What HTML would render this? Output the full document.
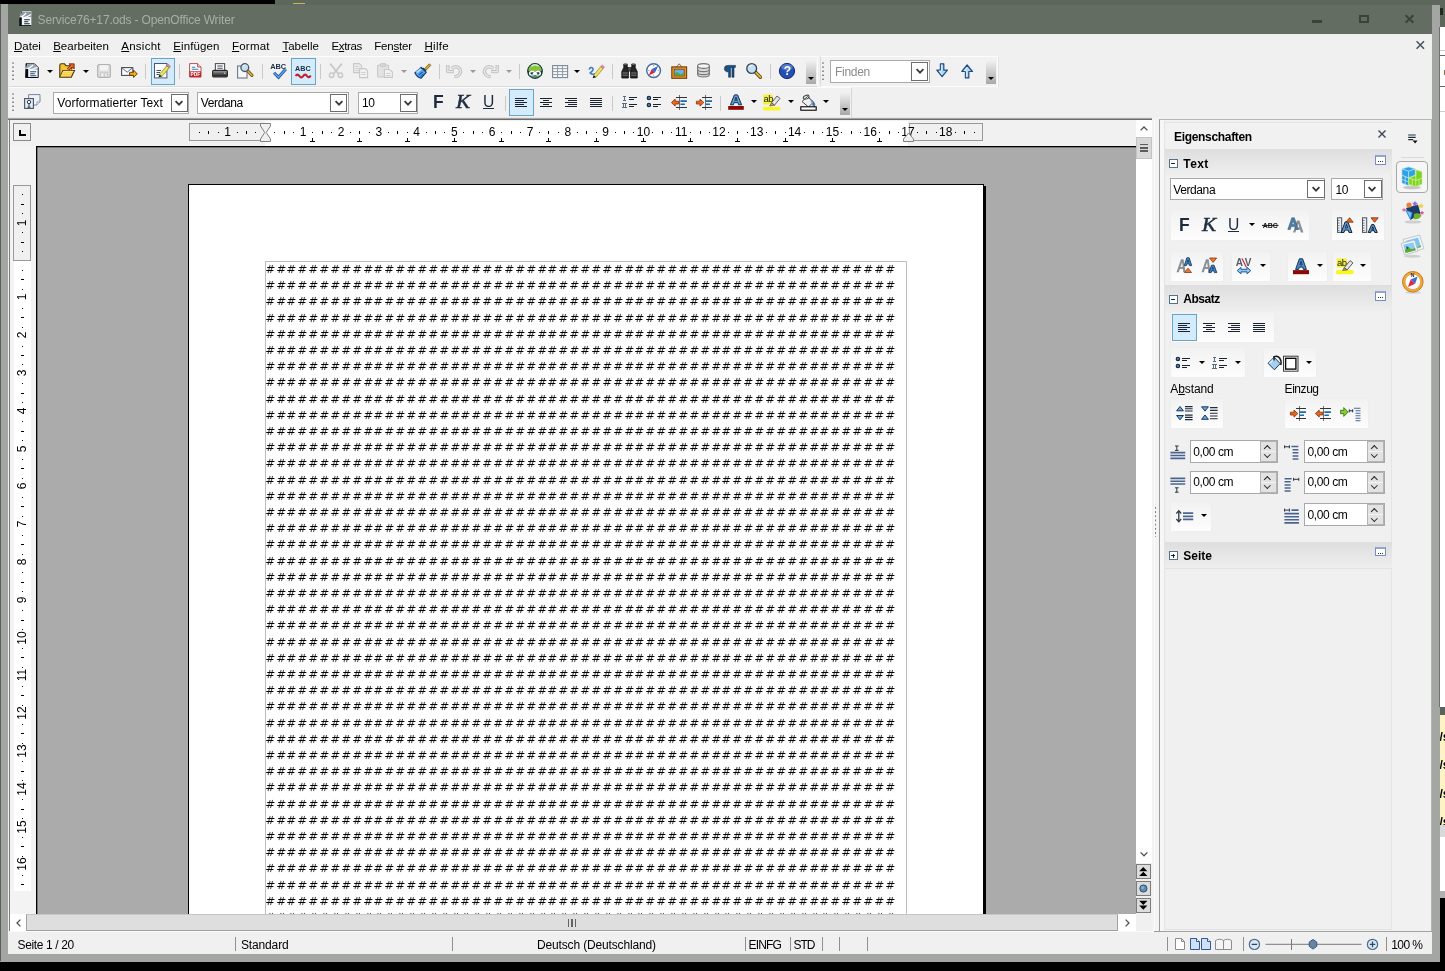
<!DOCTYPE html>
<html lang="de">
<head>
<meta charset="utf-8">
<title>Service76+17.ods - OpenOffice Writer</title>
<style>
*{box-sizing:border-box;margin:0;padding:0}
html,body{width:1445px;height:971px;overflow:hidden;background:#000}
body{position:relative;will-change:transform;font-family:"Liberation Sans",sans-serif;font-size:12px;color:#000}
.a{position:absolute}
.t{position:absolute;white-space:nowrap;line-height:14px}
u{text-decoration:underline;text-underline-offset:1px}
svg{position:absolute;overflow:visible}
/* window frame */
#topstrip{left:275px;top:0;width:1170px;height:5px;background:#5e675c}
#frame{left:0;top:4px;width:1440px;height:957.5px;background:#a3a6a3}
#frameL{left:0;top:4px;width:1px;height:957px;background:#5c5f5c}
#title{left:8px;top:4px;width:1424px;height:30.3px;background:#646d62}
#client{left:8px;top:34.3px;width:1424px;height:920px;background:#f0f0f0}
/* toolbars */
.tb{background:#f1f1f1}
.sep{position:absolute;width:1px;height:15px;background:#c9c9c9;margin-top:2px}
.btnOn{position:absolute;background:#d3ebfb;border:1px solid #6aa5c8}
.combo{position:absolute;background:#fff;border:1px solid #aaa}
.combo .dd{position:absolute;background:#fff;border:1px solid #6d6d6d}
.grip{position:absolute;width:2px;background-image:radial-gradient(circle at 1px 1px,#858585 0.55px,transparent 1px);background-size:2px 4.1px}
.ovf{position:absolute;width:10px;background:linear-gradient(#f2f2f2,#a8a8a8)}
.ovf:after{content:"";position:absolute;left:2.2px;bottom:4px;border:3px solid transparent;border-top:3px solid #000;border-bottom:none}
.arr{position:absolute;width:0;height:0;border:3px solid transparent;border-top:3px solid #000;border-bottom:none}
.arrg{position:absolute;width:0;height:0;border:3px solid transparent;border-top:3px solid #9a9a9a;border-bottom:none}
.rn{font-size:12px;line-height:14px;color:#000}
#txtreal .r{height:16.2px;line-height:16.2px;font-size:13.3px;letter-spacing:3.48px;white-space:pre;color:transparent}
.sb{font-size:12px;letter-spacing:-0.15px}
.ss{position:absolute;top:936.5px;width:1px;height:14.5px;background:#8f8f8f}
.pt{position:absolute;left:1164.5px;width:227px;height:26px;background:linear-gradient(#dedede,#eeeeee)}
.pm{position:absolute;left:1168.8px;width:9px;height:9px;border:1px solid #55718c;background:#fff}
.pm:before{content:"";position:absolute;left:1.5px;top:3px;width:4px;height:1px;background:#222}
.pp:after{content:"";position:absolute;left:3px;top:1.5px;width:1px;height:4px;background:#222}
.mo{position:absolute;left:1375.2px;width:10.8px;height:9.6px;border:1px solid #7a8ebc;border-top:2px solid #92a6d0;background:#fff}
.mo:before{content:"";position:absolute;left:2px;top:4px;width:5px;height:1px;background-image:linear-gradient(90deg,#333 1px,transparent 1px);background-size:2px 1px}
.tg{position:absolute;background:linear-gradient(#f2f2f2,#fdfdfd);box-shadow:0 0 1px #e4e4e4}
.sp{position:absolute;height:22.4px;background:#fff;border:1px solid #a9a9a9}
.sp i{position:absolute;right:0;top:0;width:17px;height:20.4px;background:linear-gradient(#e2e2e2 0,#e2e2e2 46%,#f4f4f4 46%,#f4f4f4 52%,#e2e2e2 52%);border:1px solid #b4b4b4}
.sp i:before{content:"";position:absolute;left:4.8px;top:3.6px;width:3.6px;height:3.6px;border-left:1.5px solid #222;border-top:1.5px solid #222;transform:rotate(45deg) }
.sp i:after{content:"";position:absolute;left:4.8px;top:10.2px;width:3.6px;height:3.6px;border-right:1.5px solid #222;border-bottom:1.5px solid #222;transform:rotate(45deg)}
.m{top:39px;font-size:11.5px}
</style>
</head>
<body>
<!-- desktop / other windows behind -->
<div class="a" id="topstrip"></div>
<div class="a" style="left:293px;top:2.5px;width:12px;height:1.5px;background:#c9b45a"></div>
<!-- window behind on right -->
<div class="a" style="left:1439px;top:5px;width:6px;height:22px;background:#5d665b"></div>
<div class="a" style="left:1440px;top:8px;width:3px;height:7px;background:#23281f"></div>
<div class="a" style="left:1439px;top:27px;width:6px;height:871px;background:#fff"></div>
<div class="a" style="left:1439px;top:50px;width:6px;height:1px;background:#ccc"></div>
<div class="a" style="left:1439px;top:55px;width:6px;height:1px;background:#666"></div>
<div class="a" style="left:1439px;top:86px;width:6px;height:1px;background:#666"></div>
<div class="a" style="left:1439px;top:111px;width:6px;height:1px;background:#ccc"></div>
<div class="a" style="left:1443.5px;top:70px;width:2px;height:5px;background:#8a6a50"></div>
<div class="a" style="left:1439px;top:707px;width:6px;height:8px;background:#5a635a"></div>
<div class="a" style="left:1439px;top:715px;width:6px;height:110px;background:#fdf3c4"></div>
<div class="t" style="left:1439.5px;top:730px;font-size:12px;font-weight:bold;line-height:14px">/s</div>
<div class="t" style="left:1439.5px;top:758px;font-size:12px;font-weight:bold;line-height:14px">/s</div>
<div class="t" style="left:1439.5px;top:787px;font-size:12px;font-weight:bold;line-height:14px">/s</div>
<div class="a" style="left:1439px;top:815px;width:6px;height:10px;overflow:hidden"><div class="t" style="left:0.5px;top:0;font-size:12px;font-weight:bold;line-height:14px">/s</div></div>
<div class="a" style="left:1439px;top:825px;width:6px;height:12px;background:#d9d9d9"></div>
<div class="a" style="left:1439px;top:891px;width:6px;height:7px;background:#b0b0b0"></div>
<div class="a" style="left:1439px;top:5px;width:1px;height:893px;background:#555"></div>
<!-- window frame -->
<div class="a" id="frame"></div>
<div class="a" id="frameL"></div>
<div class="a" id="title"></div>
<div class="a" id="client"></div>
<div class="a" style="left:8px;top:4px;width:1432px;height:1px;background:#5e675c"></div>
<!-- edge line --><div class="a" style="left:1439.400px;top:27px;width:.7px;height:680px;background:#707070"></div>
<!-- title bar -->
<div class="t" style="left:37.600px;top:13px;color:#a7afa5;letter-spacing:-.16px">Service76+17.ods - OpenOffice Writer</div>
<div class="a" style="left:1312px;top:20px;width:9.700px;height:2.600px;background:#39433a"></div>
<div class="a" style="left:1359px;top:14.800px;width:9.800px;height:8px;border:2px solid #39433a"></div>
<svg style="left:1405px;top:14.800px" width="9" height="8" viewBox="0 0 9 8"><path d="M.6.300l7.800 7.400M8.400.300L.6 7.700" stroke="#39433a" stroke-width="2"/></svg>
<!-- menu bar -->
<div class="a" style="left:8px;top:34.300px;width:1424px;height:22.500px;background:#f0f0f0"></div>
<div class="t m" style="left:14px;letter-spacing:0px"><u>D</u>atei</div>
<div class="t m" style="left:53.200px;letter-spacing:0px"><u>B</u>earbeiten</div>
<div class="t m" style="left:121.300px;letter-spacing:0.24px"><u>A</u>nsicht</div>
<div class="t m" style="left:173.300px;letter-spacing:0.11px"><u>E</u>infügen</div>
<div class="t m" style="left:231.900px;letter-spacing:0.25px"><u>F</u>ormat</div>
<div class="t m" style="left:282.400px;letter-spacing:0px"><u>T</u>abelle</div>
<div class="t m" style="left:331.500px;letter-spacing:-0.38px">E<u>x</u>tras</div>
<div class="t m" style="left:374.300px;letter-spacing:-0.2px">Fen<u>s</u>ter</div>
<div class="t m" style="left:424.400px;letter-spacing:0.32px"><u>H</u>ilfe</div>
<svg style="left:1416px;top:41px" width="9" height="8" viewBox="0 0 9 8"><path d="M.6.300l7.400 7.400M8 .300L.6 7.700" stroke="#46525e" stroke-width="1.500"/></svg>
<!-- toolbars backgrounds -->
<div class="a tb" style="left:9px;top:56.300px;width:809px;height:30.500px;border-top:1px solid #fcfcfc;border-right:1px solid #fcfcfc;border-bottom:1px solid #dadada"></div>
<div class="a tb" style="left:820px;top:56.300px;width:178px;height:30.500px;border-top:1px solid #fcfcfc;border-right:1px solid #fcfcfc;border-bottom:1px solid #fcfcfc;border-left:1px solid #dcdcdc"></div><div class="a" style="left:998px;top:57px;width:1px;height:30px;background:#e2e2e2"></div>
<div class="a tb" style="left:9px;top:87.300px;width:842.500px;height:30px;border-top:1px solid #fcfcfc;border-right:1px solid #d6d6d6"></div>
<div class="grip" style="left:12px;top:61.500px;height:20px"></div>
<div class="grip" style="left:822px;top:61.500px;height:20px"></div>
<div class="grip" style="left:12px;top:92.500px;height:20px"></div>
<div class="ovf" style="left:806.200px;top:59.800px;height:24px"></div>
<div class="ovf" style="left:986.200px;top:59.800px;height:24px"></div>
<div class="ovf" style="left:839.500px;top:91.500px;height:23.500px"></div>
<!-- toolbar 1 separators -->
<div class="sep" style="left:145px;top:62px"></div>
<div class="sep" style="left:178.500px;top:62px"></div>
<div class="sep" style="left:261.500px;top:62px"></div>
<div class="sep" style="left:319.500px;top:62px"></div>
<div class="sep" style="left:438.500px;top:62px"></div>
<div class="sep" style="left:518.500px;top:62px"></div>
<div class="sep" style="left:612.300px;top:62px"></div>
<div class="sep" style="left:770.300px;top:62px"></div>
<!-- toolbar 2 separators -->
<div class="sep" style="left:504.500px;top:93.500px"></div>
<div class="sep" style="left:612.300px;top:93.500px"></div>
<div class="sep" style="left:720px;top:93.500px"></div>
<!-- active buttons -->
<div class="btnOn" style="left:150.500px;top:58.300px;width:24.700px;height:26.800px"></div>
<div class="btnOn" style="left:291.300px;top:58.300px;width:25px;height:26.800px"></div>
<div class="btnOn" style="left:509px;top:89px;width:25px;height:27px"></div>
<!-- drop-down arrows -->
<div class="arr" style="left:46.500px;top:69.800px"></div>
<div class="arr" style="left:82.700px;top:69.800px"></div>
<div class="arrg" style="left:401px;top:69.800px"></div>
<div class="arrg" style="left:470px;top:69.800px"></div>
<div class="arrg" style="left:505.600px;top:69.800px"></div>
<div class="arr" style="left:574.200px;top:69.800px"></div>
<div class="arr" style="left:751.400px;top:100.200px"></div>
<div class="arr" style="left:787.600px;top:100.200px"></div>
<div class="arr" style="left:823.300px;top:100.200px"></div>
<!-- combos -->
<div class="combo" style="left:53.400px;top:91.700px;width:135.600px;height:22.300px"><div class="dd" style="left:116.600px;top:1px;width:17px;height:18.500px"></div></div>
<div class="t" style="left:57.300px;top:96.200px;letter-spacing:.05px">Vorformatierter Text</div>
<div class="combo" style="left:197.300px;top:91.700px;width:151.700px;height:22.300px"><div class="dd" style="left:132.200px;top:1px;width:17px;height:18.500px"></div></div>
<div class="t" style="left:200.800px;top:96.200px;letter-spacing:-.39px">Verdana</div>
<div class="combo" style="left:357.500px;top:91.700px;width:60.800px;height:22.300px"><div class="dd" style="left:41.300px;top:1px;width:17px;height:18.500px"></div></div>
<div class="t" style="left:362px;top:96.200px;letter-spacing:-.4px">10</div>
<div class="combo" style="left:830px;top:60px;width:100px;height:22.800px"><div class="dd" style="left:80.300px;top:1px;width:17px;height:18.800px"></div></div>
<div class="t" style="left:835px;top:65.400px;color:#8c8c8c;letter-spacing:-.28px">Finden</div>
<svg style="left:174.200px;top:99.500px" width="10" height="7" viewBox="0 0 10 7"><path d="M1.600 1.200l3.400 3.500 3.400-3.500" fill="none" stroke="#3c3c3c" stroke-width="1.900"/></svg>
<svg style="left:333.700px;top:99.500px" width="10" height="7" viewBox="0 0 10 7"><path d="M1.600 1.200l3.400 3.500 3.400-3.500" fill="none" stroke="#3c3c3c" stroke-width="1.900"/></svg>
<svg style="left:403px;top:99.500px" width="10" height="7" viewBox="0 0 10 7"><path d="M1.600 1.200l3.400 3.500 3.400-3.500" fill="none" stroke="#3c3c3c" stroke-width="1.900"/></svg>
<svg style="left:914.500px;top:68.300px" width="10" height="7" viewBox="0 0 10 7"><path d="M1.600 1.200l3.400 3.500 3.400-3.500" fill="none" stroke="#3c3c3c" stroke-width="1.900"/></svg>
<!-- title icon -->
<svg style="left:18.800px;top:10.700px" width="13" height="15" viewBox="0 0 13 15"><path d="M1.500 1.500l2-1.500h8.800v14.800h-12z" fill="#f4f7f9"/><path d="M.3 6.500L3 .600h9.300v5.400z" fill="#8a989c"/><path d="M.2 6.800q4-1 7-4.800M2.500 7.500q5-1 9.500-4" stroke="#f8fafb" stroke-width="1.300" fill="none"/><path d="M2 .700l1 .200-1.600 3.400z" fill="#0c1014"/><rect x=".2" y="6.300" width="2.600" height="8.600" fill="#080c12"/><path d="M.2 14.500h12" stroke="#10161c" stroke-width=".9"/><path d="M5.200 8.800h5.600M5.200 10.800h4M5.200 12.800h5.600" stroke="#1c2834" stroke-width="1.100"/></svg>
<!-- toolbar 1 icons -->
<svg style="left:24.500px;top:63px" width="14" height="15" viewBox="0 0 14 15"><path d="M1.500.500h7.700l4 4v10h-12.500z" fill="#f2f6fa" stroke="#0a0c14" stroke-width="1"/><path d="M.6 6.200L2.200.600h7l3.600 3.800v2z" fill="#9aa8b4"/><path d="M.6 6.600q4-.8 7.400-4.600M3 7.300q5-.8 9.500-3" stroke="#f8fafc" stroke-width="1.200" fill="none"/><rect x=".5" y="6" width="2.700" height="8.600" fill="#080c14"/><path d="M1.600.600L.6 5.500V.600z" fill="#0a0c14"/><path d="M5.200 8.700h6M5.200 10.700h4.600M5.200 12.700h6" stroke="#2a4a72" stroke-width="1.100"/></svg>
<svg style="left:59px;top:63px" width="16" height="15" viewBox="0 0 16 15"><path d="M.8 14V2.300q0-1.500 1.500-1.500h3.200l1.500 2h5.800v4" fill="#f2c33a" stroke="#4a3200" stroke-width="1.100"/><path d="M.8 14.200l3.200-6.700h11.500l-3.200 6.700z" fill="#f8d452" stroke="#4a3200" stroke-width="1.100"/><path d="M1.800 13.500l2.700-5.300h10" stroke="#fff0a8" stroke-width=".8" fill="none"/><path d="M9 6.500l4.500-4.500" stroke="#7a2a08" stroke-width="3"/><path d="M10 .800h5.200v5.200z" fill="#d9541e" stroke="#7a2a08" stroke-width=".8"/><path d="M9 6.500l4.500-4.500" stroke="#e8743a" stroke-width="1.600"/></svg>
<svg style="left:97px;top:64px" width="14" height="14" viewBox="0 0 14 14"><rect x=".6" y=".6" width="12.800" height="12.800" rx="1.500" fill="#dcdcdc" stroke="#b2b2b2" stroke-width="1.100"/><rect x="2.800" y="1.200" width="8.400" height="5.300" fill="#f4f4f4"/><rect x="3" y="8.300" width="8" height="4.600" fill="#c8c8c8"/><rect x="4" y="9.300" width="2.600" height="3.200" fill="#f0f0f0"/><rect x="8" y="9.300" width="2" height="3.200" fill="#e8e8e8"/></svg>
<svg style="left:121px;top:67px" width="17" height="11" viewBox="0 0 17 11"><rect x=".6" y=".6" width="11.200" height="7.800" fill="#fcfcfd" stroke="#4c4c50" stroke-width="1.100"/><path d="M.8.800l5.400 4.400 5.400-4.400" fill="none" stroke="#5a6e9e"/><path d="M8.600 5.300h3.900v-2.200l3.800 3.700-3.800 3.700v-2.200h-3.900z" fill="#f4ac1c" stroke="#5e3c00" stroke-width=".9" stroke-linejoin="round"/></svg>
<svg style="left:154px;top:63px" width="17" height="16" viewBox="0 0 17 16"><rect x=".5" y=".5" width="12.400" height="14.400" fill="#fbfcfe" stroke="#48587a" stroke-width="1"/><path d="M2.500 7.500h4.500M2.500 9.500h3.500M2.500 11.500h3" stroke="#34525e" stroke-width="1"/><path d="M5.400 11.400L12.600 2.800l2.600 2.200L8 13.600z" fill="#dcd444" stroke="#8a7e20" stroke-width=".6"/><path d="M6.800 12.200L13.800 3.800" stroke="#f4eea0" stroke-width=".9"/><path d="M12.600 2.800l1.400-1.700 2.600 2.200-1.400 1.700z" fill="#cc8c98" stroke="#9a5a68" stroke-width=".4"/><path d="M5.400 11.400l-.9 2.900L8 13.600z" fill="#181818"/></svg>
<svg style="left:189.200px;top:63.300px" width="13" height="15" viewBox="0 0 13 15"><path d="M.6.600h8l3.400 3.400v10h-11.400z" fill="#fff" stroke="#b04040" stroke-width=".9"/><path d="M8.600.600v3.400h3.400" fill="#f0d0d0" stroke="#a83434" stroke-width=".8"/><path d="M2.800 4.300h3.600M2.800 6.300h6.600" stroke="#3a7ac0" stroke-width="1.100"/><rect x=".6" y="8.300" width="11.400" height="5.800" fill="#c0262c"/><text x="1.400" y="13" font-size="5.400" font-weight="bold" fill="#fff" font-family="Liberation Sans" textLength="9.800" lengthAdjust="spacingAndGlyphs">PDF</text></svg>
<svg style="left:212px;top:63.300px" width="16" height="15" viewBox="0 0 16 15"><rect x="3.400" y=".6" width="9.200" height="8" fill="#fff" stroke="#50545c" stroke-width="1.100"/><path d="M5.300 3h5.400M5.300 5.200h5.400" stroke="#3c4658" stroke-width="1.100"/><rect x=".6" y="7.400" width="14.800" height="6.600" rx="1.200" fill="#5a5a5a" stroke="#262626" stroke-width="1.100"/><rect x="1.300" y="8" width="13.400" height="1.600" fill="#8c8c8c"/><rect x="1.400" y="11.600" width="13.200" height="1.800" fill="#2e2e2e"/><rect x="12" y="9.800" width="1.400" height="1" fill="#c8e8a0"/></svg>
<svg style="left:237.300px;top:62.800px" width="16" height="16" viewBox="0 0 16 16"><rect x=".6" y="3" width="9.400" height="12" fill="#f6f8fc" stroke="#6c7486" stroke-width="1.100"/><path d="M10.600 7.800l4.400 4.600" stroke="#5a4208" stroke-width="3" stroke-linecap="round"/><path d="M11 8.200l4 4.200" stroke="#e0b440" stroke-width="1.600" stroke-linecap="round"/><circle cx="7.800" cy="4.600" r="3.900" fill="#c8def2" stroke="#46566a" stroke-width="1.300"/><path d="M5.600 3.600q1-1.600 2.800-1.500" stroke="#fff" fill="none" stroke-width=".9"/></svg>
<svg style="left:269.500px;top:62.800px" width="17" height="16" viewBox="0 0 17 16"><text x=".2" y="6.400" font-size="7.600" font-weight="bold" fill="#1a2c44" font-family="Liberation Sans" textLength="16" lengthAdjust="spacingAndGlyphs">ABC</text><path d="M4 9.700l4.500 4.500 7.300-8.200" stroke="#1c4e96" stroke-width="3" fill="none"/><path d="M4 9.700l4.500 4.500 7.300-8.200" stroke="#5aa4ee" stroke-width="1.500" fill="none"/></svg>
<svg style="left:295px;top:65px" width="17" height="13" viewBox="0 0 17 13"><text x="0" y="6.200" font-size="7.600" font-weight="bold" fill="#1a2c44" font-family="Liberation Sans" textLength="15.600" lengthAdjust="spacingAndGlyphs">ABC</text><path d="M.6 11q1.900-2.800 3.800 0t3.800 0 3.800 0 3.600-.6" stroke="#c61e28" stroke-width="2.200" fill="none"/></svg>
<svg style="left:328.200px;top:62.900px" width="16" height="15" viewBox="0 0 16 15"><path d="M2.200.600l8.600 10.600M13.800.600L5.200 11.200" stroke="#c8c8c8" stroke-width="1.800"/><circle cx="3.600" cy="12.300" r="2.200" fill="none" stroke="#c8c8c8" stroke-width="1.500"/><circle cx="12.400" cy="12.300" r="2.200" fill="none" stroke="#c8c8c8" stroke-width="1.500"/></svg>
<svg style="left:353px;top:63px" width="16" height="15" viewBox="0 0 16 15"><path d="M.6.600h5.800l2.200 2.200v6.800h-8z" fill="#ececec" stroke="#c8c8c8" stroke-width="1.100"/><path d="M2.200 3.500h3.500M2.200 5.500h4.500M2.200 7.500h4.500" stroke="#d2d2d2"/><path d="M6.600 5.600h5.800l2.200 2.200v6.800h-8z" fill="#f0f0f0" stroke="#c8c8c8" stroke-width="1.100"/><path d="M8.200 9.500h4.500M8.200 11.500h4.500" stroke="#d2d2d2"/></svg>
<svg style="left:377.300px;top:63px" width="16" height="15" viewBox="0 0 16 15"><rect x=".6" y="2" width="11" height="12" rx="1" fill="#e2e2e2" stroke="#c8c8c8" stroke-width="1.100"/><rect x="3.400" y=".6" width="5.400" height="3" rx=".8" fill="#d6d6d6" stroke="#c8c8c8"/><path d="M7.400 6.500h5l3 2.600v5.300h-8z" fill="#f2f2f2" stroke="#c8c8c8" stroke-width="1.100"/><path d="M9 10.500h4.500M9 12.500h4.500" stroke="#d2d2d2"/></svg>
<svg style="left:414px;top:62.600px" width="17" height="16" viewBox="0 0 17 16"><path d="M10.700 5.600l4.600-4.800 1.500 1.500-4.600 4.800z" fill="#dcae3c" stroke="#6a4a10" stroke-width=".8"/><path d="M9.200 4.600l3.400 3.400-1.200 1.200-3.400-3.400z" fill="#1c2c44"/><path d="M.8 9.800l6.400-5.500 5 5-5.200 6q-3.800-.8-6.200-5.500z" fill="#58a6ee" stroke="#123a6c" stroke-width="1.100" stroke-linejoin="round"/><path d="M2.600 9.600l4.500-3.800" stroke="#b8dcfc" stroke-width="2"/><path d="M5 12l3.600-3.200M6.600 13.600l3.200-2.800" stroke="#1c58a8" stroke-width="1.100"/></svg>
<svg style="left:446px;top:63.800px" width="17" height="15" viewBox="0 0 17 15"><g fill="none" stroke="#c2c2c2" stroke-width="3.400" stroke-linejoin="round"><path d="M1.800 1v6.600h6"/><path d="M5.600 4.600q4.200-3.400 7.600-.4 3 3.400-.4 7-1.600 1.400-4.400 1.400"/></g><g fill="none" stroke="#e9e9e9" stroke-width="1.300"><path d="M1.800 1.600v6h5.400"/><path d="M5.600 4.600q4.200-3.400 7.600-.4 3 3.400-.4 7-1.600 1.400-3.800 1.400"/></g></svg>
<svg style="left:481.800px;top:63.800px" width="17" height="15" viewBox="0 0 17 15"><g fill="none" stroke="#c2c2c2" stroke-width="3.400" stroke-linejoin="round"><path d="M15.200 1v6.600h-6"/><path d="M11.400 4.600q-4.200-3.400-7.600-.4-3 3.400.4 7 1.600 1.400 4.400 1.400"/></g><g fill="none" stroke="#e9e9e9" stroke-width="1.300"><path d="M15.200 1.600v6h-5.400"/><path d="M11.400 4.600q-4.200-3.400-7.600-.4-3 3.400.4 7 1.600 1.400 3.800 1.400"/></g></svg>
<svg style="left:527.400px;top:62.600px" width="16" height="16" viewBox="0 0 16 16"><circle cx="8" cy="8" r="7.400" fill="#5a9c6c" stroke="#1c3c44" stroke-width="1.100"/><path d="M1.600 6q2.400-5 6.400-5t6.400 5l-1 2.400h-10.800z" fill="#88c434"/><path d="M4.400 3.200q3.600-2.600 7.200 0" stroke="#dcf2fa" stroke-width="1.200" fill="none"/><path d="M1 8h14v3.400q-.4 1.200-1 1.600h-12q-.6-.4-1-1.600z" fill="#1a3e48"/><rect x="2.700" y="8.500" width="5" height="3.600" rx="1.800" fill="none" stroke="#fff" stroke-width="1.400"/><rect x="8.300" y="8.500" width="5" height="3.600" rx="1.800" fill="none" stroke="#fff" stroke-width="1.400"/><path d="M5.800 10.300h4.400" stroke="#fff" stroke-width="1.300"/></svg>
<svg style="left:551.900px;top:64.900px" width="16" height="14" viewBox="0 0 16 14"><rect x=".6" y=".6" width="15" height="12" fill="#f8fafc" stroke="#7a8896" stroke-width="1.100"/><path d="M5.600.600v12M10.600.600v12M.6 3.600h15M.6 6.600h15M.6 9.600h15" stroke="#8c9aa8" stroke-width="1"/></svg>
<svg style="left:588px;top:62.800px" width="17" height="16" viewBox="0 0 17 16"><path d="M1 6.500q1.800-3.200 3.600-1.400t-2.400 4.800q2 2.400 5 .8" stroke="#3a78c8" stroke-width="1.500" fill="none"/><path d="M5.600 12.200L12.600 3.700l2.500 2L8.100 14.200z" fill="#ecd84e" stroke="#8a7a24" stroke-width=".6"/><path d="M6.800 13.200L13.800 4.700" stroke="#f8f0a0" stroke-width=".8"/><path d="M12.600 3.700l1.500-1.800 2.500 2-1.500 1.800z" fill="#e58a9c" stroke="#a85a6a" stroke-width=".4"/><path d="M5.600 12.200l-1 3L8.100 14.200z" fill="#1a1a1a"/></svg>
<svg style="left:621px;top:62.800px" width="17" height="16" viewBox="0 0 17 16"><path d="M.8 15V8.500l2-4v-3.500h3.400v3.500l1.200 3.500v7zM16.200 15V8.500l-2-4v-3.500h-3.400v3.500l-1.200 3.500v7z" fill="#262626" stroke="#0c0c0c" stroke-width=".8"/><rect x="6.500" y="4.500" width="4" height="3.600" fill="#484848" stroke="#0c0c0c" stroke-width=".6"/><path d="M1.400 10h5.400M1.400 12.200h5.400M10.200 10h5.400M10.200 12.200h5.400" stroke="#7c7c7c" stroke-width="1"/><path d="M3.200 1.500h2.600M11.200 1.500h2.600" stroke="#666" stroke-width="1"/></svg>
<svg style="left:646px;top:63px" width="16" height="16" viewBox="0 0 16 16"><circle cx="7.600" cy="7.600" r="6.900" fill="#fdfdfd" stroke="#4a6c9c" stroke-width="1.400"/><path d="M7.600 2v1.500M7.600 11.700v1.500M2 7.600h1.500M11.700 7.600h1.500" stroke="#8a9ab0" stroke-width=".8"/><path d="M2.800 12.400l2.800-6.200 3.400 3.400z" fill="#e2203c"/><path d="M12.400 2.800l-6.800 3.400 3.400 3.400z" fill="#3468c8"/></svg>
<svg style="left:671.200px;top:62.600px" width="17" height="16" viewBox="0 0 17 16"><path d="M5.600 4l2.600-3.200 2.600 3.200" fill="none" stroke="#8a5a1a" stroke-width=".9"/><rect x=".8" y="3.900" width="14.800" height="11.400" fill="#ee9224" stroke="#6e3c08" stroke-width="1.100"/><rect x="3.200" y="6.200" width="10" height="6.800" fill="#6cb0f0" stroke="#6e3c08" stroke-width=".7"/><path d="M3.500 10.800q2.800-2.800 4.800-.4t4.600-1.600v3.800h-9.400z" fill="#58a828"/></svg>
<svg style="left:697.400px;top:63.300px" width="14" height="15" viewBox="0 0 14 15"><path d="M.6 3v8.600q0 2.400 5.900 2.400t5.900-2.400v-8.600" fill="#d8d8d8" stroke="#767676" stroke-width="1.100"/><ellipse cx="6.500" cy="3" rx="5.900" ry="2.400" fill="#f4f4f4" stroke="#767676" stroke-width="1.100"/><path d="M.6 6.200q0 2.400 5.900 2.400t5.900-2.400M.6 9.200q0 2.400 5.900 2.400t5.900-2.400" fill="none" stroke="#767676" stroke-width="1.100"/></svg>
<svg style="left:723.500px;top:65.200px" width="12" height="13" viewBox="0 0 12 13"><path d="M4 .400h7.400v2h-1.400v9.800h-2v-9.800h-1.400v9.800h-2v-5.200q-4.200 0-4.200-3.400t3.600-3.200z" fill="#1d4f82" stroke="#0e2c4c" stroke-width=".6"/></svg>
<svg style="left:746px;top:62.700px" width="16" height="16" viewBox="0 0 16 16"><path d="M9.600 9.200l4.800 5" stroke="#5a4208" stroke-width="3.400" stroke-linecap="round"/><path d="M10 9.600l4.400 4.600" stroke="#e6ba48" stroke-width="1.800" stroke-linecap="round"/><circle cx="5.700" cy="5.500" r="4.900" fill="#c6dff3" stroke="#38485a" stroke-width="1.400"/><path d="M3 4.200q1.200-2 3.400-1.900" stroke="#fff" fill="none" stroke-width="1"/></svg>
<svg style="left:779px;top:62.600px" width="16" height="16" viewBox="0 0 16 16"><circle cx="8" cy="8" r="7.600" fill="#2250b2" stroke="#10286c" stroke-width="1"/><ellipse cx="8" cy="4.200" rx="5.600" ry="3.200" fill="#7a9ce6" opacity=".55"/><text x="4.700" y="12.400" font-size="12" font-weight="bold" fill="#fff" font-family="Liberation Sans">?</text></svg>
<svg style="left:936px;top:63px" width="13" height="15" viewBox="0 0 13 15"><path d="M4.400.800h3.400v6.400h3.600l-5.300 6.500-5.300-6.500h3.600z" fill="#b2d6f4" stroke="#1c4c80" stroke-width="1.200" stroke-linejoin="round"/><path d="M5.400 1.500v6.500h-2l2.700 3.400" stroke="#e8f4fc" stroke-width=".8" fill="none"/></svg>
<svg style="left:961px;top:63.800px" width="13" height="15" viewBox="0 0 13 15"><path d="M4.400 13.900h3.400v-6.400h3.600l-5.300-6.500-5.300 6.500h3.600z" fill="#b2d6f4" stroke="#1c4c80" stroke-width="1.200" stroke-linejoin="round"/><path d="M5.400 13v-6.300h-2l2.700-3.400" stroke="#e8f4fc" stroke-width=".8" fill="none"/></svg>
<!-- toolbar 2 icons -->
<svg style="left:24px;top:94.300px" width="17" height="15" viewBox="0 0 17 15"><path d="M4.600.600h11.400v7.400l-3 3h-8.400z" fill="#eef2f8" stroke="#7a869a" stroke-width="1"/><path d="M13 11v-3h3" fill="#fff" stroke="#7a869a" stroke-width=".8"/><rect x=".6" y="4.600" width="8.800" height="9.800" fill="#e4eaf2" stroke="#445468" stroke-width="1.100"/><circle cx="5" cy="8" r="1.700" fill="#fff" stroke="#2a3a50" stroke-width="1"/><path d="M5 9.700v3.500M3.500 13.200h3" stroke="#2a3a50" stroke-width="1"/></svg>
<div class="t" style="left:433px;top:92.300px;font-size:17.500px;line-height:20px;font-weight:bold;color:#1c2b3e">F</div>
<div class="t" style="left:455.500px;top:91.200px;font-family:'Liberation Serif',serif;font-size:19px;line-height:22px;font-weight:normal;-webkit-text-stroke:.45px #1c2b3e;font-style:italic;color:#1c2b3e;transform:scaleX(1.12);transform-origin:0 0">K</div>
<div class="t" style="left:483px;top:91.300px;font-size:16.200px;line-height:20px;color:#1c2b3e;transform:scaleX(.97);transform-origin:0 0">U</div>
<div class="a" style="left:483px;top:107.800px;width:11px;height:1.200px;background:#1c2b3e"></div>
<svg style="left:515px;top:98px" width="88" height="9" viewBox="0 0 88 9" shape-rendering="crispEdges"><path d="M0 0h12v1h-12zM0 2h9v1h-9zM0 4h12v1h-12zM0 6h9v1h-9zM0 8h12v1h-12zM25 0h12v1h-12zM28 2h6v1h-6zM25 4h12v1h-12zM28 6h6v1h-6zM25 8h12v1h-12zM50 0h12v1h-12zM53 2h9v1h-9zM50 4h12v1h-12zM53 6h9v1h-9zM50 8h12v1h-12zM75 0h12v1h-12zM75 2h12v1h-12zM75 4h12v1h-12zM75 6h12v1h-12zM75 8h12v1h-12z" fill="#1a222e"/></svg>
<svg style="left:622px;top:96px" width="16" height="12" viewBox="0 0 16 12" shape-rendering="crispEdges"><path d="M1 0h3v1h-3zM2 1h1v3h-1zM1 4h3v1h-3zM0 7h5v1h-5zM1 8h1v3h-1zM3 8h1v3h-1zM0 11h5v1h-5z" fill="#5c6e82"/><path d="M7 1h8v1h-8zM7 3h5v1h-5zM7 8h8v1h-8zM7 10h5v1h-5z" fill="#1a222e"/></svg>
<svg style="left:646px;top:96px" width="16" height="12" viewBox="0 0 16 12"><circle cx="2.900" cy="2" r="1.700" fill="#4a7cb0" stroke="#14243c" stroke-width="1.100"/><circle cx="2.900" cy="9" r="1.700" fill="#4a7cb0" stroke="#14243c" stroke-width="1.100"/><path d="M7 1h8v1h-8zM7 3h5v1h-5zM7 8h8v1h-8zM7 10h5v1h-5z" fill="#1a222e" shape-rendering="crispEdges"/></svg>
<svg style="left:671px;top:95px" width="17" height="15" viewBox="0 0 17 15"><path d="M8 0h1v15h-1z" fill="#6e7276" shape-rendering="crispEdges"/><path d="M5 2h11v1h-11zM5 12h11v1h-11z" fill="#30343a" shape-rendering="crispEdges"/><path d="M9.400 5.300h6.500v1.800h-6.500zM9.400 8.400h4.500v1.700h-4.500z" fill="#1c6cac"/><path d="M.4 7.600l3.800-3.500v2.100h3.600v2.800h-3.600v2.100z" fill="#e8681e" stroke="#8a3000" stroke-width=".8" stroke-linejoin="round"/></svg>
<svg style="left:696px;top:95px" width="17" height="15" viewBox="0 0 17 15"><path d="M8.600 0h1v15h-1z" fill="#6e7276" shape-rendering="crispEdges"/><path d="M5.600 2h10.400v1h-10.400zM5.600 12h10.400v1h-10.400z" fill="#30343a" shape-rendering="crispEdges"/><path d="M9.800 5.300h6.200v1.800h-6.200zM9.800 8.400h4.200v1.700h-4.200z" fill="#1c6cac"/><path d="M.4 6.200h3.600v-2.100l3.800 3.500-3.800 3.500v-2.100h-3.600z" fill="#e8681e" stroke="#8a3000" stroke-width=".8" stroke-linejoin="round"/></svg>
<svg style="left:728px;top:94px" width="16" height="16" viewBox="0 0 16 16"><path d="M2.400 10.800L6.400.900h3.200l4 9.900h-3l-.7-2.200H6.100l-.7 2.200zM6.900 6.300h2.200L8 3.300z" fill="#5a9ad8" stroke="#16304e" stroke-width="1" stroke-linejoin="round" fill-rule="evenodd"/><rect x=".2" y="12" width="15.600" height="3.800" fill="#8b0808"/></svg>
<svg style="left:763px;top:93.500px" width="18" height="17" viewBox="0 0 18 17"><rect x=".2" y=".5" width="9.500" height="10" fill="#f6f03a"/><rect x=".2" y="12.900" width="17" height="3.500" fill="#f8f820"/><text x=".5" y="8.300" font-size="9.500" fill="#222" font-family="Liberation Sans" letter-spacing="-.5">ab</text><path d="M8.500 8.800l5.500-6.800 3 2.400-5.500 6.800z" fill="#e4e4e4" stroke="#555" stroke-width=".9"/><path d="M8.500 8.800l-1.800 3.200 4.800-.8z" fill="#c8a040" stroke="#555" stroke-width=".7"/></svg>
<svg style="left:799.500px;top:93.500px" width="17" height="17" viewBox="0 0 17 17"><path d="M2 7.500l5.500-5 6 5.500-5 5z" fill="#f0f0f0" stroke="#4a4a4a" stroke-width="1"/><ellipse cx="6.200" cy="3.200" rx="3" ry="1.800" fill="none" stroke="#4a4a4a" stroke-width="1" transform="rotate(-20 6.200 3.200)"/><path d="M13.200 7.800q2.600 2 1.200 5.200-1.600-1.200-1.200-5.200z" fill="#5a8cc8" stroke="#2a4a7a" stroke-width=".6"/><path d="M9.500 4.300l4 3.700-1 3.500" fill="#7aa4d4" stroke="#3a5a8a" stroke-width=".6"/><rect x=".8" y="12.800" width="15.400" height="3.400" fill="#fff" stroke="#000" stroke-width="1.100"/></svg>
<!-- document window -->
<div class="a" style="left:8px;top:117px;width:1144px;height:1px;background:#e6e6e6"></div>
<div class="a" style="left:8px;top:118px;width:1144px;height:1px;background:#a4a4a4"></div>
<div class="a" style="left:8px;top:119px;width:1144px;height:1px;background:#6c6c6c"></div>
<div class="a" style="left:8.5px;top:119px;width:1.5px;height:812px;background:#7c7c7c"></div>
<div class="a" style="left:10px;top:120px;width:1125.5px;height:26px;background:#f1f1f1"></div>
<div class="a" style="left:10px;top:146px;width:26px;height:768.5px;background:#f3f3f3"></div>
<div class="a" style="left:36px;top:146px;width:1099.5px;height:768.5px;background:#000"></div>
<div class="a" id="doc" style="left:37px;top:147px;width:1098.5px;height:767.4px;background:#ababab;overflow:hidden">
<div class="a" style="left:0;top:0;width:1100px;height:1px;background:rgba(0,0,0,.3)"></div><div class="a" style="left:0;top:0;width:1px;height:800px;background:rgba(0,0,0,.3)"></div>
<div class="a" style="left:151.2px;top:36.5px;width:795.1px;height:800px;background:#fff;border-left:1px solid #000;border-top:1px solid #000"></div>
<div class="a" style="left:946.3px;top:36.5px;width:1px;height:800px;background:#000"></div>
<div class="a" style="left:947.2px;top:39.2px;width:2px;height:800px;background:#000"></div>
<div class="a" style="left:227.9px;top:113.8px;width:642.6px;height:700px;border:1px solid #bdbdbd;border-bottom:none"></div>
<svg id="txt" style="left:229px;top:118px" width="640" height="660" viewBox="0 0 640 660" shape-rendering="auto">
<defs><g id="h"><path d="M4.1 0L2 8M6.6 0L4.5 8" stroke="#000" stroke-opacity=".68" stroke-width="1.05" fill="none"/><path d="M1.2 2h7.2v1h-7.2zM.2 5h7.2v1h-7.2z" fill="#000"/></g>
<g id="row"><use href="#h" x="0"/><use href="#h" x="11"/><use href="#h" x="21"/><use href="#h" x="32"/><use href="#h" x="43"/><use href="#h" x="54"/><use href="#h" x="65"/><use href="#h" x="76"/><use href="#h" x="87"/><use href="#h" x="98"/><use href="#h" x="108"/><use href="#h" x="119"/><use href="#h" x="130"/><use href="#h" x="141"/><use href="#h" x="152"/><use href="#h" x="163"/><use href="#h" x="174"/><use href="#h" x="185"/><use href="#h" x="195"/><use href="#h" x="206"/><use href="#h" x="217"/><use href="#h" x="228"/><use href="#h" x="239"/><use href="#h" x="250"/><use href="#h" x="261"/><use href="#h" x="272"/><use href="#h" x="282"/><use href="#h" x="293"/><use href="#h" x="304"/><use href="#h" x="315"/><use href="#h" x="326"/><use href="#h" x="337"/><use href="#h" x="348"/><use href="#h" x="359"/><use href="#h" x="369"/><use href="#h" x="380"/><use href="#h" x="391"/><use href="#h" x="402"/><use href="#h" x="413"/><use href="#h" x="424"/><use href="#h" x="435"/><use href="#h" x="446"/><use href="#h" x="456"/><use href="#h" x="467"/><use href="#h" x="478"/><use href="#h" x="489"/><use href="#h" x="500"/><use href="#h" x="511"/><use href="#h" x="522"/><use href="#h" x="533"/><use href="#h" x="544"/><use href="#h" x="554"/><use href="#h" x="565"/><use href="#h" x="576"/><use href="#h" x="587"/><use href="#h" x="598"/><use href="#h" x="609"/><use href="#h" x="620"/></g></defs>
<use href="#row" y="0"/><use href="#row" y="16"/><use href="#row" y="32"/><use href="#row" y="49"/><use href="#row" y="65"/><use href="#row" y="81"/><use href="#row" y="97"/><use href="#row" y="113"/><use href="#row" y="130"/><use href="#row" y="146"/><use href="#row" y="162"/><use href="#row" y="178"/><use href="#row" y="194"/><use href="#row" y="211"/><use href="#row" y="227"/><use href="#row" y="243"/><use href="#row" y="259"/><use href="#row" y="275"/><use href="#row" y="292"/><use href="#row" y="308"/><use href="#row" y="324"/><use href="#row" y="340"/><use href="#row" y="356"/><use href="#row" y="373"/><use href="#row" y="389"/><use href="#row" y="405"/><use href="#row" y="421"/><use href="#row" y="437"/><use href="#row" y="454"/><use href="#row" y="470"/><use href="#row" y="486"/><use href="#row" y="502"/><use href="#row" y="518"/><use href="#row" y="535"/><use href="#row" y="551"/><use href="#row" y="567"/><use href="#row" y="583"/><use href="#row" y="599"/><use href="#row" y="616"/><use href="#row" y="632"/><use href="#row" y="648"/>
</svg>
<div class="a" id="txtreal" style="left:229px;top:115px">
<div class="r">##########################################################</div>
<div class="r">##########################################################</div>
<div class="r">##########################################################</div>
<div class="r">##########################################################</div>
<div class="r">##########################################################</div>
<div class="r">##########################################################</div>
<div class="r">##########################################################</div>
<div class="r">##########################################################</div>
<div class="r">##########################################################</div>
<div class="r">##########################################################</div>
<div class="r">##########################################################</div>
<div class="r">##########################################################</div>
<div class="r">##########################################################</div>
<div class="r">##########################################################</div>
<div class="r">##########################################################</div>
<div class="r">##########################################################</div>
<div class="r">##########################################################</div>
<div class="r">##########################################################</div>
<div class="r">##########################################################</div>
<div class="r">##########################################################</div>
<div class="r">##########################################################</div>
<div class="r">##########################################################</div>
<div class="r">##########################################################</div>
<div class="r">##########################################################</div>
<div class="r">##########################################################</div>
<div class="r">##########################################################</div>
<div class="r">##########################################################</div>
<div class="r">##########################################################</div>
<div class="r">##########################################################</div>
<div class="r">##########################################################</div>
<div class="r">##########################################################</div>
<div class="r">##########################################################</div>
<div class="r">##########################################################</div>
<div class="r">##########################################################</div>
<div class="r">##########################################################</div>
<div class="r">##########################################################</div>
<div class="r">##########################################################</div>
<div class="r">##########################################################</div>
<div class="r">##########################################################</div>
<div class="r">##########################################################</div>
<div class="r">##########################################################</div>
</div>
</div>
<!-- horizontal ruler -->
<div class="a" style="left:265.4px;top:120.5px;width:643px;height:25.5px;background:#fff"></div>
<div class="a" style="left:13px;top:123.2px;width:18px;height:17.6px;border:1px solid #8a8a8a;background:#f0f0f0"></div>
<div class="a" style="left:19px;top:130px;width:2px;height:6px;background:#000"></div><div class="a" style="left:19px;top:134px;width:7px;height:2px;background:#000"></div>
<div class="a" style="left:189px;top:123.4px;width:77px;height:17.2px;border:1px solid #999;background:#f0f0f0"></div>
<div class="a" style="left:908.6px;top:123.4px;width:74.2px;height:17.2px;border:1px solid #999;background:#f0f0f0"></div>
<div class="a" style="left:255.4px;top:132px;width:1px;height:1px;background:#000"></div>
<div class="a" style="left:246.0px;top:131px;width:1px;height:3px;background:#000"></div>
<div class="a" style="left:236.5px;top:132px;width:1px;height:1px;background:#000"></div>
<div class="a" style="left:217.6px;top:132px;width:1px;height:1px;background:#000"></div>
<div class="a" style="left:208.2px;top:131px;width:1px;height:3px;background:#000"></div>
<div class="a" style="left:198.8px;top:132px;width:1px;height:1px;background:#000"></div>
<div class="t rn" style="left:212.6px;top:125.2px;width:30px;text-align:center">1</div>
<div class="a" style="left:274.3px;top:132px;width:1px;height:1px;background:#000"></div>
<div class="a" style="left:283.8px;top:131px;width:1px;height:3px;background:#000"></div>
<div class="a" style="left:293.2px;top:132px;width:1px;height:1px;background:#000"></div>
<div class="t rn" style="left:288.2px;top:125.2px;width:30px;text-align:center">1</div>
<div class="a" style="left:312.1px;top:132px;width:1px;height:1px;background:#000"></div>
<div class="a" style="left:321.6px;top:131px;width:1px;height:3px;background:#000"></div>
<div class="a" style="left:331.0px;top:132px;width:1px;height:1px;background:#000"></div>
<div class="t rn" style="left:326.0px;top:125.2px;width:30px;text-align:center">2</div>
<div class="a" style="left:349.9px;top:132px;width:1px;height:1px;background:#000"></div>
<div class="a" style="left:359.4px;top:131px;width:1px;height:3px;background:#000"></div>
<div class="a" style="left:368.8px;top:132px;width:1px;height:1px;background:#000"></div>
<div class="t rn" style="left:363.8px;top:125.2px;width:30px;text-align:center">3</div>
<div class="a" style="left:387.8px;top:132px;width:1px;height:1px;background:#000"></div>
<div class="a" style="left:397.2px;top:131px;width:1px;height:3px;background:#000"></div>
<div class="a" style="left:406.6px;top:132px;width:1px;height:1px;background:#000"></div>
<div class="t rn" style="left:401.6px;top:125.2px;width:30px;text-align:center">4</div>
<div class="a" style="left:425.5px;top:132px;width:1px;height:1px;background:#000"></div>
<div class="a" style="left:435.0px;top:131px;width:1px;height:3px;background:#000"></div>
<div class="a" style="left:444.4px;top:132px;width:1px;height:1px;background:#000"></div>
<div class="t rn" style="left:439.4px;top:125.2px;width:30px;text-align:center">5</div>
<div class="a" style="left:463.3px;top:132px;width:1px;height:1px;background:#000"></div>
<div class="a" style="left:472.8px;top:131px;width:1px;height:3px;background:#000"></div>
<div class="a" style="left:482.2px;top:132px;width:1px;height:1px;background:#000"></div>
<div class="t rn" style="left:477.2px;top:125.2px;width:30px;text-align:center">6</div>
<div class="a" style="left:501.1px;top:132px;width:1px;height:1px;background:#000"></div>
<div class="a" style="left:510.6px;top:131px;width:1px;height:3px;background:#000"></div>
<div class="a" style="left:520.0px;top:132px;width:1px;height:1px;background:#000"></div>
<div class="t rn" style="left:515.0px;top:125.2px;width:30px;text-align:center">7</div>
<div class="a" style="left:538.9px;top:132px;width:1px;height:1px;background:#000"></div>
<div class="a" style="left:548.4px;top:131px;width:1px;height:3px;background:#000"></div>
<div class="a" style="left:557.8px;top:132px;width:1px;height:1px;background:#000"></div>
<div class="t rn" style="left:552.8px;top:125.2px;width:30px;text-align:center">8</div>
<div class="a" style="left:576.8px;top:132px;width:1px;height:1px;background:#000"></div>
<div class="a" style="left:586.2px;top:131px;width:1px;height:3px;background:#000"></div>
<div class="a" style="left:595.6px;top:132px;width:1px;height:1px;background:#000"></div>
<div class="t rn" style="left:590.6px;top:125.2px;width:30px;text-align:center">9</div>
<div class="a" style="left:614.5px;top:132px;width:1px;height:1px;background:#000"></div>
<div class="a" style="left:624.0px;top:131px;width:1px;height:3px;background:#000"></div>
<div class="a" style="left:633.4px;top:132px;width:1px;height:1px;background:#000"></div>
<div class="t rn" style="left:628.4px;top:125.2px;width:30px;text-align:center">10</div>
<div class="a" style="left:652.3px;top:132px;width:1px;height:1px;background:#000"></div>
<div class="a" style="left:661.8px;top:131px;width:1px;height:3px;background:#000"></div>
<div class="a" style="left:671.2px;top:132px;width:1px;height:1px;background:#000"></div>
<div class="t rn" style="left:666.2px;top:125.2px;width:30px;text-align:center">11</div>
<div class="a" style="left:690.1px;top:132px;width:1px;height:1px;background:#000"></div>
<div class="a" style="left:699.6px;top:131px;width:1px;height:3px;background:#000"></div>
<div class="a" style="left:709.0px;top:132px;width:1px;height:1px;background:#000"></div>
<div class="t rn" style="left:704.0px;top:125.2px;width:30px;text-align:center">12</div>
<div class="a" style="left:727.9px;top:132px;width:1px;height:1px;background:#000"></div>
<div class="a" style="left:737.4px;top:131px;width:1px;height:3px;background:#000"></div>
<div class="a" style="left:746.8px;top:132px;width:1px;height:1px;background:#000"></div>
<div class="t rn" style="left:741.8px;top:125.2px;width:30px;text-align:center">13</div>
<div class="a" style="left:765.8px;top:132px;width:1px;height:1px;background:#000"></div>
<div class="a" style="left:775.2px;top:131px;width:1px;height:3px;background:#000"></div>
<div class="a" style="left:784.6px;top:132px;width:1px;height:1px;background:#000"></div>
<div class="t rn" style="left:779.6px;top:125.2px;width:30px;text-align:center">14</div>
<div class="a" style="left:803.5px;top:132px;width:1px;height:1px;background:#000"></div>
<div class="a" style="left:813.0px;top:131px;width:1px;height:3px;background:#000"></div>
<div class="a" style="left:822.4px;top:132px;width:1px;height:1px;background:#000"></div>
<div class="t rn" style="left:817.4px;top:125.2px;width:30px;text-align:center">15</div>
<div class="a" style="left:841.3px;top:132px;width:1px;height:1px;background:#000"></div>
<div class="a" style="left:850.8px;top:131px;width:1px;height:3px;background:#000"></div>
<div class="a" style="left:860.2px;top:132px;width:1px;height:1px;background:#000"></div>
<div class="t rn" style="left:855.2px;top:125.2px;width:30px;text-align:center">16</div>
<div class="a" style="left:879.1px;top:132px;width:1px;height:1px;background:#000"></div>
<div class="a" style="left:888.6px;top:131px;width:1px;height:3px;background:#000"></div>
<div class="a" style="left:898.0px;top:132px;width:1px;height:1px;background:#000"></div>
<div class="t rn" style="left:893.0px;top:125.2px;width:30px;text-align:center">17</div>
<div class="a" style="left:916.9px;top:132px;width:1px;height:1px;background:#000"></div>
<div class="a" style="left:926.4px;top:131px;width:1px;height:3px;background:#000"></div>
<div class="a" style="left:935.8px;top:132px;width:1px;height:1px;background:#000"></div>
<div class="t rn" style="left:930.8px;top:125.2px;width:30px;text-align:center">18</div>
<div class="a" style="left:954.7px;top:132px;width:1px;height:1px;background:#000"></div>
<div class="a" style="left:964.2px;top:131px;width:1px;height:3px;background:#000"></div>
<div class="a" style="left:973.6px;top:132px;width:1px;height:1px;background:#000"></div>
<div class="a" style="left:312.1px;top:138px;width:1px;height:4px;background:#000"></div><div class="a" style="left:310.1px;top:141px;width:5px;height:1px;background:#000"></div>
<div class="a" style="left:359.4px;top:138px;width:1px;height:4px;background:#000"></div><div class="a" style="left:357.4px;top:141px;width:5px;height:1px;background:#000"></div>
<div class="a" style="left:406.6px;top:138px;width:1px;height:4px;background:#000"></div><div class="a" style="left:404.6px;top:141px;width:5px;height:1px;background:#000"></div>
<div class="a" style="left:453.9px;top:138px;width:1px;height:4px;background:#000"></div><div class="a" style="left:451.9px;top:141px;width:5px;height:1px;background:#000"></div>
<div class="a" style="left:501.1px;top:138px;width:1px;height:4px;background:#000"></div><div class="a" style="left:499.1px;top:141px;width:5px;height:1px;background:#000"></div>
<div class="a" style="left:548.4px;top:138px;width:1px;height:4px;background:#000"></div><div class="a" style="left:546.4px;top:141px;width:5px;height:1px;background:#000"></div>
<div class="a" style="left:595.6px;top:138px;width:1px;height:4px;background:#000"></div><div class="a" style="left:593.6px;top:141px;width:5px;height:1px;background:#000"></div>
<div class="a" style="left:642.9px;top:138px;width:1px;height:4px;background:#000"></div><div class="a" style="left:640.9px;top:141px;width:5px;height:1px;background:#000"></div>
<div class="a" style="left:690.1px;top:138px;width:1px;height:4px;background:#000"></div><div class="a" style="left:688.1px;top:141px;width:5px;height:1px;background:#000"></div>
<div class="a" style="left:737.4px;top:138px;width:1px;height:4px;background:#000"></div><div class="a" style="left:735.4px;top:141px;width:5px;height:1px;background:#000"></div>
<div class="a" style="left:784.6px;top:138px;width:1px;height:4px;background:#000"></div><div class="a" style="left:782.6px;top:141px;width:5px;height:1px;background:#000"></div>
<div class="a" style="left:831.9px;top:138px;width:1px;height:4px;background:#000"></div><div class="a" style="left:829.9px;top:141px;width:5px;height:1px;background:#000"></div>
<div class="a" style="left:879.1px;top:138px;width:1px;height:4px;background:#000"></div><div class="a" style="left:877.1px;top:141px;width:5px;height:1px;background:#000"></div>
<svg style="left:259px;top:122px" width="14" height="21" viewBox="0 0 14 21"><path d="M1.5 1.5h10v2.5l-4.3 6.5 4.3 6.5v2.5h-10v-2.5l4.3-6.5-4.3-6.5z" fill="#f0f0f0" stroke="#808080" stroke-width="1"/></svg>
<svg style="left:902px;top:132px" width="14" height="11" viewBox="0 0 14 11"><path d="M1.5 9.5v-2.5l5-6 5 6v2.5z" fill="#f0f0f0" stroke="#808080" stroke-width="1"/></svg>
<!-- vertical ruler -->
<div class="a" style="left:13.5px;top:260.5px;width:17.5px;height:630.5px;background:#fff"></div>
<div class="a" style="left:13px;top:185.2px;width:17.8px;height:75.5px;border:1px solid #999;background:#f0f0f0"></div>
<div class="a" style="left:22px;top:251.1px;width:1px;height:1px;background:#000"></div>
<div class="a" style="left:21px;top:241.6px;width:3px;height:1px;background:#000"></div>
<div class="a" style="left:22px;top:232.2px;width:1px;height:1px;background:#000"></div>
<div class="a" style="left:22px;top:213.2px;width:1px;height:1px;background:#000"></div>
<div class="a" style="left:21px;top:203.8px;width:3px;height:1px;background:#000"></div>
<div class="a" style="left:22px;top:194.4px;width:1px;height:1px;background:#000"></div>
<div class="t rn" style="left:7px;top:216.2px;width:30px;text-align:center;transform:rotate(-90deg)">1</div>
<div class="a" style="left:22px;top:269.9px;width:1px;height:1px;background:#000"></div>
<div class="a" style="left:21px;top:279.4px;width:3px;height:1px;background:#000"></div>
<div class="a" style="left:22px;top:288.9px;width:1px;height:1px;background:#000"></div>
<div class="t rn" style="left:7px;top:290.3px;width:30px;text-align:center;transform:rotate(-90deg)">1</div>
<div class="a" style="left:22px;top:307.8px;width:1px;height:1px;background:#000"></div>
<div class="a" style="left:21px;top:317.2px;width:3px;height:1px;background:#000"></div>
<div class="a" style="left:22px;top:326.6px;width:1px;height:1px;background:#000"></div>
<div class="t rn" style="left:7px;top:328.1px;width:30px;text-align:center;transform:rotate(-90deg)">2</div>
<div class="a" style="left:22px;top:345.6px;width:1px;height:1px;background:#000"></div>
<div class="a" style="left:21px;top:355.0px;width:3px;height:1px;background:#000"></div>
<div class="a" style="left:22px;top:364.4px;width:1px;height:1px;background:#000"></div>
<div class="t rn" style="left:7px;top:365.9px;width:30px;text-align:center;transform:rotate(-90deg)">3</div>
<div class="a" style="left:22px;top:383.4px;width:1px;height:1px;background:#000"></div>
<div class="a" style="left:21px;top:392.8px;width:3px;height:1px;background:#000"></div>
<div class="a" style="left:22px;top:402.2px;width:1px;height:1px;background:#000"></div>
<div class="t rn" style="left:7px;top:403.7px;width:30px;text-align:center;transform:rotate(-90deg)">4</div>
<div class="a" style="left:22px;top:421.1px;width:1px;height:1px;background:#000"></div>
<div class="a" style="left:21px;top:430.6px;width:3px;height:1px;background:#000"></div>
<div class="a" style="left:22px;top:440.0px;width:1px;height:1px;background:#000"></div>
<div class="t rn" style="left:7px;top:441.5px;width:30px;text-align:center;transform:rotate(-90deg)">5</div>
<div class="a" style="left:22px;top:458.9px;width:1px;height:1px;background:#000"></div>
<div class="a" style="left:21px;top:468.4px;width:3px;height:1px;background:#000"></div>
<div class="a" style="left:22px;top:477.9px;width:1px;height:1px;background:#000"></div>
<div class="t rn" style="left:7px;top:479.3px;width:30px;text-align:center;transform:rotate(-90deg)">6</div>
<div class="a" style="left:22px;top:496.8px;width:1px;height:1px;background:#000"></div>
<div class="a" style="left:21px;top:506.2px;width:3px;height:1px;background:#000"></div>
<div class="a" style="left:22px;top:515.6px;width:1px;height:1px;background:#000"></div>
<div class="t rn" style="left:7px;top:517.1px;width:30px;text-align:center;transform:rotate(-90deg)">7</div>
<div class="a" style="left:22px;top:534.5px;width:1px;height:1px;background:#000"></div>
<div class="a" style="left:21px;top:544.0px;width:3px;height:1px;background:#000"></div>
<div class="a" style="left:22px;top:553.5px;width:1px;height:1px;background:#000"></div>
<div class="t rn" style="left:7px;top:554.9px;width:30px;text-align:center;transform:rotate(-90deg)">8</div>
<div class="a" style="left:22px;top:572.3px;width:1px;height:1px;background:#000"></div>
<div class="a" style="left:21px;top:581.8px;width:3px;height:1px;background:#000"></div>
<div class="a" style="left:22px;top:591.2px;width:1px;height:1px;background:#000"></div>
<div class="t rn" style="left:7px;top:592.7px;width:30px;text-align:center;transform:rotate(-90deg)">9</div>
<div class="a" style="left:22px;top:610.1px;width:1px;height:1px;background:#000"></div>
<div class="a" style="left:21px;top:619.6px;width:3px;height:1px;background:#000"></div>
<div class="a" style="left:22px;top:629.0px;width:1px;height:1px;background:#000"></div>
<div class="t rn" style="left:7px;top:630.5px;width:30px;text-align:center;transform:rotate(-90deg)">10</div>
<div class="a" style="left:22px;top:648.0px;width:1px;height:1px;background:#000"></div>
<div class="a" style="left:21px;top:657.4px;width:3px;height:1px;background:#000"></div>
<div class="a" style="left:22px;top:666.8px;width:1px;height:1px;background:#000"></div>
<div class="t rn" style="left:7px;top:668.3px;width:30px;text-align:center;transform:rotate(-90deg)">11</div>
<div class="a" style="left:22px;top:685.8px;width:1px;height:1px;background:#000"></div>
<div class="a" style="left:21px;top:695.2px;width:3px;height:1px;background:#000"></div>
<div class="a" style="left:22px;top:704.6px;width:1px;height:1px;background:#000"></div>
<div class="t rn" style="left:7px;top:706.1px;width:30px;text-align:center;transform:rotate(-90deg)">12</div>
<div class="a" style="left:22px;top:723.5px;width:1px;height:1px;background:#000"></div>
<div class="a" style="left:21px;top:733.0px;width:3px;height:1px;background:#000"></div>
<div class="a" style="left:22px;top:742.5px;width:1px;height:1px;background:#000"></div>
<div class="t rn" style="left:7px;top:743.9px;width:30px;text-align:center;transform:rotate(-90deg)">13</div>
<div class="a" style="left:22px;top:761.3px;width:1px;height:1px;background:#000"></div>
<div class="a" style="left:21px;top:770.8px;width:3px;height:1px;background:#000"></div>
<div class="a" style="left:22px;top:780.2px;width:1px;height:1px;background:#000"></div>
<div class="t rn" style="left:7px;top:781.7px;width:30px;text-align:center;transform:rotate(-90deg)">14</div>
<div class="a" style="left:22px;top:799.1px;width:1px;height:1px;background:#000"></div>
<div class="a" style="left:21px;top:808.6px;width:3px;height:1px;background:#000"></div>
<div class="a" style="left:22px;top:818.0px;width:1px;height:1px;background:#000"></div>
<div class="t rn" style="left:7px;top:819.5px;width:30px;text-align:center;transform:rotate(-90deg)">15</div>
<div class="a" style="left:22px;top:836.9px;width:1px;height:1px;background:#000"></div>
<div class="a" style="left:21px;top:846.4px;width:3px;height:1px;background:#000"></div>
<div class="a" style="left:22px;top:855.8px;width:1px;height:1px;background:#000"></div>
<div class="t rn" style="left:7px;top:857.3px;width:30px;text-align:center;transform:rotate(-90deg)">16</div>
<div class="a" style="left:22px;top:874.8px;width:1px;height:1px;background:#000"></div>
<div class="a" style="left:21px;top:884.2px;width:3px;height:1px;background:#000"></div>
<!-- vertical scrollbar -->
<div class="a" style="left:1135.5px;top:120px;width:16px;height:742.5px;background:#fff"></div>
<div class="a" style="left:1135.5px;top:862.5px;width:16.5px;height:68px;background:#f0f0f0"></div>
<svg style="left:1135.5px;top:120px" width="16" height="17" viewBox="0 0 16 17"><path d="M4.6 10.4L8 7l3.4 3.4" fill="none" stroke="#505050" stroke-width="1.3"/></svg>
<div class="a" style="left:1135.5px;top:137px;width:16px;height:22.3px;background:#d9d9d9;border:1px solid #c4c4c4"></div>
<div class="a" style="left:1139.5px;top:143.8px;width:8px;height:1.6px;background:#5c5c5c"></div>
<div class="a" style="left:1139.5px;top:147.1px;width:8px;height:1.6px;background:#5c5c5c"></div>
<div class="a" style="left:1139.5px;top:150.4px;width:8px;height:1.6px;background:#5c5c5c"></div>
<svg style="left:1135.5px;top:846px" width="16" height="17" viewBox="0 0 16 17"><path d="M4.6 6.4L8 9.8l3.4-3.4" fill="none" stroke="#505050" stroke-width="1.3"/></svg>
<!-- navigation buttons -->
<div class="a" style="left:1136.4px;top:864px;width:14.6px;height:14.6px;background:#dcdcdc;border:1px solid #7c7c7c"></div>
<svg style="left:1136.4px;top:864px" width="15" height="15" viewBox="0 0 15 15"><path d="M3.2 7.200l4.100-4.200 4.100 4.200zM3.200 12l4.100-4.200 4.100 4.200z" fill="#000"/></svg>
<div class="a" style="left:1136.4px;top:881px;width:14.6px;height:14.6px;background:#dcdcdc;border:1px solid #7c7c7c"></div>
<svg style="left:1136.4px;top:881px" width="15" height="15" viewBox="0 0 15 15"><circle cx="7.4" cy="7.5" r="3.6" fill="#5f8cb0" stroke="#2d4f6e" stroke-width="1"/><circle cx="6.6" cy="6.6" r="1.6" fill="#8fb4d2" opacity=".8"/></svg>
<div class="a" style="left:1136.4px;top:898.2px;width:14.6px;height:14.6px;background:#dcdcdc;border:1px solid #7c7c7c"></div>
<svg style="left:1136.4px;top:898.2px" width="15" height="15" viewBox="0 0 15 15"><path d="M3.200 2.800h8.200L7.300 7zM3.200 7.600h8.200L7.300 11.800z" fill="#000"/></svg>
<!-- horizontal scrollbar -->
<div class="a" style="left:10px;top:914.4px;width:1125.5px;height:16.4px;background:#fff"></div>
<div class="a" style="left:26.3px;top:914.4px;width:1092px;height:16.5px;background:#dedede;border:1px solid #a2a2a2;border-top-color:#c6c6c6"></div>
<svg style="left:10px;top:914.6px" width="17" height="16" viewBox="0 0 17 16"><path d="M10.4 4.6L7 8l3.4 3.4" fill="none" stroke="#505050" stroke-width="1.3"/></svg>
<svg style="left:1118.7px;top:914.6px" width="17" height="16" viewBox="0 0 17 16"><path d="M6.6 4.6L10 8l-3.4 3.4" fill="none" stroke="#505050" stroke-width="1.3"/></svg>
<div class="a" style="left:568px;top:919px;width:1.3px;height:7.5px;background:#636363"></div>
<div class="a" style="left:571.3px;top:919px;width:1.3px;height:7.5px;background:#636363"></div>
<div class="a" style="left:574.6px;top:919px;width:1.3px;height:7.5px;background:#636363"></div>
<!-- status bar -->
<div class="a" style="left:10px;top:931px;width:1144px;height:1px;background:#fafafa"></div>
<div class="a" style="left:8px;top:931.5px;width:1424px;height:22.7px;background:#f0f0f0"></div>
<div class="t sb" style="left:17.5px;top:938.1px;letter-spacing:-.36px">Seite 1 / 20</div>
<div class="t sb" style="left:241px;top:938.1px">Standard</div>
<div class="t sb" style="left:537px;top:938.1px">Deutsch (Deutschland)</div>
<div class="t sb" style="left:748.6px;top:938.1px;letter-spacing:-.85px">EINFG</div>
<div class="t sb" style="left:793.6px;top:938.1px;letter-spacing:-1.1px">STD</div>
<div class="t sb" style="left:1391.3px;top:938.1px;letter-spacing:-.6px">100 %</div>
<div class="ss" style="left:235px"></div>
<div class="ss" style="left:452px"></div>
<div class="ss" style="left:744.5px"></div>
<div class="ss" style="left:789.5px"></div>
<div class="ss" style="left:822.3px"></div>
<div class="ss" style="left:838.5px"></div>
<div class="ss" style="left:867.3px"></div>
<div class="ss" style="left:1167px"></div>
<div class="ss" style="left:1243px"></div>
<div class="ss" style="left:1386px"></div>
<!-- page view icons -->
<svg style="left:1175px;top:937.5px" width="60" height="12" viewBox="0 0 60 12">
<path d="M.5.5h6l3 3v8h-9z" fill="#fdfdfd" stroke="#8c8c8c"/><path d="M6.5.5v3h3" fill="none" stroke="#8c8c8c"/>
<path d="M15.5.5h6l3 3v8h-9z" fill="#cfe0f6" stroke="#2f579c"/><path d="M21.500.5v3h3" fill="#fff" stroke="#2f579c"/>
<path d="M26.500.5h6l3 3v8h-9z" fill="#cfe0f6" stroke="#2f579c"/><path d="M32.500.5v3h3" fill="#fff" stroke="#2f579c"/>
<path d="M40.500 2.500c2-1.600 6-1.600 8 0v9h-8zM48.500 2.500c2-1.600 6-1.600 8 0v9h-8z" fill="#f4f4f4" stroke="#8c8c8c"/>
</svg>
<!-- zoom slider -->
<svg style="left:1247px;top:936px" width="134" height="17" viewBox="0 0 134 17">
<path d="M18.500 8.300h96" stroke="#7a7a7a" stroke-width="1"/><path d="M44.500 3v11" stroke="#7a7a7a" stroke-width="1"/>
<circle cx="7.400" cy="8.400" r="5.100" fill="#dce8f4" stroke="#4c6c8e" stroke-width="1.200"/><path d="M4.600 8.400h5.600" stroke="#2a4868" stroke-width="1.300"/>
<circle cx="125.500" cy="8.400" r="5.100" fill="#dce8f4" stroke="#4c6c8e" stroke-width="1.200"/><path d="M122.700 8.400h5.600M125.500 5.600v5.600" stroke="#2a4868" stroke-width="1.300"/>
<path d="M66 3.500l3.800 2.600v4.200l-3.800 2.800-3.800-2.800v-4.200z" fill="#6486a6" stroke="#3b5878" stroke-width="1"/>
</svg>
<!-- splitter between doc and sidebar -->
<div class="a" style="left:1152px;top:118px;width:7.5px;height:813px;background:#f3f3f3"></div>
<div class="a" style="left:1154px;top:120px;width:1px;height:811px;background:#fbfbfb"></div>
<div class="a" style="left:1154px;top:931px;width:6px;height:1px;background:#9a9a9a"></div>
<div class="a" style="left:1154.5px;top:507px;width:1.5px;height:30px;background-image:radial-gradient(circle at .7px .7px,#777 .6px,transparent .9px);background-size:1.5px 4.2px"></div>
<!-- sidebar -->
<div class="a" id="sb" style="left:1159px;top:118.5px;width:273px;height:813px;background:#f1f1f1;border-left:1px solid #9a9a9a;border-top:1px solid #b6b6b6;border-bottom:1px solid #a2a2a2"></div>
<div class="a" style="left:1160px;top:119.5px;width:3.5px;height:811px;background:#f7f7f7"></div>
<div class="a" style="left:1163.5px;top:121.5px;width:228.5px;height:808px;background:#f0f0f0;border:1px solid #e4e4e4"></div>
<div class="a" style="left:1392px;top:119.5px;width:39px;height:811px;background:#f1f1f1"></div>
<div class="a" style="left:1431px;top:119.5px;width:1px;height:811px;background:#b4b4b4"></div>
<!-- deck title -->
<div class="a" style="left:1164.5px;top:122.500px;width:227px;height:26.500px;background:#f1f1f1"></div>
<div class="t" style="left:1174px;top:129.600px;font-weight:bold;letter-spacing:-.32px">Eigenschaften</div>
<svg style="left:1378px;top:129.500px" width="8" height="8" viewBox="0 0 8 8"><path d="M.5.500l7 7M7.500.500l-7 7" stroke="#3b4654" stroke-width="1.400"/></svg>
<!-- panel titles -->
<div class="pt" style="top:149px"></div>
<div class="pt" style="top:285px"></div>
<div class="pt" style="top:541.500px"></div>
<div class="a" style="left:1164.500px;top:568px;width:227px;height:1px;background:#e2e2e2"></div>
<div class="pm" style="top:158.500px"></div>
<div class="pm" style="top:294.500px"></div>
<div class="pm pp" style="top:551px"></div>
<div class="t" style="left:1183.300px;top:156.500px;font-weight:bold;letter-spacing:.4px">Text</div>
<div class="t" style="left:1183.300px;top:292.300px;font-weight:bold;letter-spacing:-.47px">Absatz</div>
<div class="t" style="left:1183.300px;top:548.700px;font-weight:bold">Seite</div>
<div class="mo" style="top:155px"></div>
<div class="mo" style="top:291.300px"></div>
<div class="mo" style="top:546.700px"></div>
<!-- font combos -->
<div class="combo" style="left:1170px;top:177.600px;width:155px;height:22.800px"><div class="dd" style="left:136px;top:1px;width:17.500px;height:18.500px"></div></div>
<div class="t" style="left:1173.200px;top:182.500px;letter-spacing:-.39px">Verdana</div>
<div class="combo" style="left:1331px;top:177.600px;width:51.500px;height:22.800px"><div class="dd" style="left:32px;top:1px;width:17.500px;height:18.500px"></div></div>
<div class="t" style="left:1335.500px;top:182.500px;letter-spacing:-.4px">10</div>
<svg style="left:1311px;top:186px" width="10" height="7" viewBox="0 0 10 7"><path d="M1.600 1.200l3.400 3.500 3.400-3.500" fill="none" stroke="#3c3c3c" stroke-width="1.900"/></svg>
<svg style="left:1367.300px;top:186px" width="10" height="7" viewBox="0 0 10 7"><path d="M1.600 1.200l3.400 3.500 3.400-3.500" fill="none" stroke="#3c3c3c" stroke-width="1.900"/></svg>
<!-- toolbox group backgrounds -->
<div class="tg" style="left:1170.800px;top:210.300px;width:138.400px;height:29.700px"></div>
<div class="tg" style="left:1332px;top:210.300px;width:52px;height:29.700px"></div>
<div class="tg" style="left:1170.800px;top:251.800px;width:52.700px;height:29.200px"></div>
<div class="tg" style="left:1231.800px;top:251.800px;width:38.700px;height:29.200px"></div>
<div class="tg" style="left:1288.200px;top:251.800px;width:38.800px;height:29.200px"></div>
<div class="tg" style="left:1332.800px;top:251.800px;width:38.500px;height:29.200px"></div>
<div class="tg" style="left:1170.800px;top:312.400px;width:103px;height:29.900px"></div>
<div class="btnOn" style="left:1172px;top:314px;width:25px;height:26.600px"></div>
<div class="tg" style="left:1170.800px;top:348.100px;width:74.700px;height:29.400px"></div>
<div class="tg" style="left:1263.800px;top:348.100px;width:52.300px;height:29.400px"></div>
<div class="tg" style="left:1170.800px;top:398.600px;width:52.700px;height:29.500px"></div>
<div class="tg" style="left:1284.600px;top:398.600px;width:83px;height:29.500px"></div>
<div class="tg" style="left:1170.800px;top:502.400px;width:40.400px;height:28.600px"></div>
<!-- labels -->
<div class="t" style="left:1170.300px;top:381.500px;letter-spacing:-.1px">A<u>b</u>stand</div>
<div class="t" style="left:1284.600px;top:381.500px;letter-spacing:-.45px">Einzug</div>
<!-- spin fields -->
<div class="sp" style="left:1190.200px;top:440.300px;width:87.400px"><i></i></div>
<div class="sp" style="left:1304.200px;top:440.300px;width:80.400px"><i></i></div>
<div class="sp" style="left:1190.200px;top:471.300px;width:87.400px"><i></i></div>
<div class="sp" style="left:1304.200px;top:471.300px;width:80.400px"><i></i></div>
<div class="sp" style="left:1304.200px;top:503.400px;width:80.400px"><i></i></div>
<div class="t" style="left:1193.200px;top:444.700px;letter-spacing:-.4px">0,00 cm</div>
<div class="t" style="left:1307.500px;top:444.700px;letter-spacing:-.4px">0,00 cm</div>
<div class="t" style="left:1193.200px;top:475.400px;letter-spacing:-.4px">0,00 cm</div>
<div class="t" style="left:1307.500px;top:475.400px;letter-spacing:-.4px">0,00 cm</div>
<div class="t" style="left:1307.500px;top:507.500px;letter-spacing:-.4px">0,00 cm</div>
<!-- sidebar: text group icons -->
<div class="t" style="left:1179px;top:214.800px;font-size:17.500px;line-height:20px;font-weight:bold;color:#1c2b3e">F</div>
<div class="t" style="left:1201.500px;top:213.800px;font-family:'Liberation Serif',serif;font-size:19px;line-height:22px;font-weight:normal;-webkit-text-stroke:.45px #1c2b3e;font-style:italic;color:#1c2b3e;transform:scaleX(1.12);transform-origin:0 0">K</div>
<div class="t" style="left:1228px;top:214.300px;font-size:16.200px;line-height:20px;color:#1c2b3e;transform:scaleX(.97);transform-origin:0 0">U</div>
<div class="a" style="left:1228px;top:231px;width:11px;height:1.200px;background:#1c2b3e"></div>
<div class="arr" style="left:1248.800px;top:223px"></div>
<svg style="left:1262px;top:221px" width="17" height="9" viewBox="0 0 17 9"><text x=".8" y="7" font-size="7.800" font-weight="bold" fill="#161616" font-family="Liberation Sans" textLength="15" lengthAdjust="spacingAndGlyphs">ABC</text><path d="M0 4.400h16.500" stroke="#1a1a1a" stroke-width="1"/></svg>
<svg style="left:1287px;top:217px" width="17" height="16" viewBox="0 0 17 16"><path d="M6 15.500L10 3.500h2.400l4 12h-2.500l-.9-3h-3.700l-.9 3zM10 10.500h2.400l-1.200-4z" fill="#8a8e92" fill-rule="evenodd"/><path d="M.8 12.500L4.800.800h2.600l4 11.700H8.800l-.9-2.900H4.200l-.9 2.900zM4.900 7.600h2.400L6.100 3.800z" fill="#4e7ea6" stroke="#2c5478" stroke-width=".5" fill-rule="evenodd"/></svg>
<svg style="left:1337px;top:216.500px" width="17" height="16" viewBox="0 0 17 16"><rect x=".5" y=".8" width="4.200" height="14.600" fill="#e6ecf2" stroke="#50555c" stroke-width="1"/><path d="M.5 3.500h2M.5 6h2M.5 8.500h2M.5 11h2M.5 13.500h2" stroke="#50555c" stroke-width=".7"/><path d="M4 15.500L8.200 4.800h2.600L15 15.500h-3l-.8-2.400H7.800L7 15.500zM8.500 10.800h2l-1-3.200z" fill="#5a94cc" stroke="#14283e" stroke-width="1" stroke-linejoin="round" fill-rule="evenodd"/><path d="M9 5.200l3.600-4.500 3.600 4.500z" fill="#de6a28" stroke="#7a2c08" stroke-width=".8" stroke-linejoin="round"/></svg>
<svg style="left:1362px;top:216.500px" width="17" height="16" viewBox="0 0 17 16"><rect x=".5" y=".8" width="4.200" height="14.600" fill="#e6ecf2" stroke="#50555c" stroke-width="1"/><path d="M.5 3.500h2M.5 6h2M.5 8.500h2M.5 11h2M.5 13.500h2" stroke="#50555c" stroke-width=".7"/><path d="M6.200 15.500L9.600 7.600h2.300l3.400 7.900h-2.500l-.6-1.800H9.300l-.6 1.800zM9.900 12.300h1.700l-.85-2.500z" fill="#5a94cc" stroke="#14283e" stroke-width="1" stroke-linejoin="round" fill-rule="evenodd"/><path d="M9 .800h7.200l-3.600 4.500z" fill="#de6a28" stroke="#7a2c08" stroke-width=".8" stroke-linejoin="round"/></svg>
<!-- super/sub -->
<svg style="left:1175.500px;top:257px" width="17" height="16" viewBox="0 0 17 16"><path d="M.5 15.300L5 2.300h2.600l2 13h-2.300l-.4-3.200H3.800l-1 3.200zM4.500 10h2.200l-.6-4.800z" fill="#8a9096" fill-rule="evenodd"/><path d="M8.300 8.600L10.800.800h2.400l2.500 7.800h-2.300l-.5-1.800h-2l-.5 1.800zM11.400 5.200h1.300l-.65-2.200z" fill="#3e82c4" stroke="#123252" stroke-width=".8" stroke-linejoin="round" fill-rule="evenodd"/><path d="M8.500 15.500l3.500-4.300 3.500 4.300z" fill="#e87a34" stroke="#8a3208" stroke-width=".8" stroke-linejoin="round"/></svg>
<svg style="left:1200.500px;top:257px" width="17" height="16" viewBox="0 0 17 16"><path d="M.5 15.300L5 2.300h2.600l2 13h-2.300l-.4-3.200H3.800l-1 3.200zM4.500 10h2.200l-.6-4.800z" fill="#8a9096" fill-rule="evenodd"/><path d="M7.800 15.600L10.500 8.200h2.600l2.700 7.400h-2.400l-.5-1.700h-2.200l-.5 1.700zM11.100 12.200h1.400l-.7-2.100z" fill="#3e82c4" stroke="#123252" stroke-width=".8" stroke-linejoin="round" fill-rule="evenodd"/><path d="M8.500 1h7.200l-3.600 4.400z" fill="#e87a34" stroke="#8a3208" stroke-width=".8" stroke-linejoin="round"/></svg>
<!-- spacing -->
<svg style="left:1235.500px;top:258px" width="17" height="17" viewBox="0 0 17 17"><text x="-.2" y="7.600" font-size="10" font-weight="bold" fill="#545c64" font-family="Liberation Sans">A</text><text x="8.800" y="7.600" font-size="10" font-weight="bold" fill="#545c64" font-family="Liberation Sans">V</text><path d="M6 .500l4.500 9" stroke="#d42a3a" stroke-width="1.200"/><path d="M1.200 12.600l3.800-3.200v1.900h6v-1.900l3.800 3.200-3.800 3.200v-1.900h-6v1.900z" fill="#8cc8f2" stroke="#1c5c9c" stroke-width="1" stroke-linejoin="round"/></svg>
<div class="arr" style="left:1259.500px;top:264px"></div>
<!-- font color -->
<svg style="left:1293px;top:257.500px" width="16" height="17" viewBox="0 0 16 17"><path d="M2.600 11.400L6.400.800h3.200l3.800 10.600h-3l-.7-2.300H6.300l-.7 2.300zM6.900 6.800h2.200L8 3.400z" fill="#4a8ccc" stroke="#16304e" stroke-width="1" stroke-linejoin="round" fill-rule="evenodd"/><rect x="0" y="12.100" width="16" height="4.100" fill="#8b0808"/></svg>
<div class="arr" style="left:1316.500px;top:264px"></div>
<!-- highlight -->
<svg style="left:1336px;top:257.500px" width="18" height="17" viewBox="0 0 18 17"><rect x=".8" y=".5" width="10" height="9" fill="#f6f03a"/><rect x="0" y="12.100" width="17.600" height="4.100" rx="1.500" fill="#f8f820"/><text x="1" y="8" font-size="9.500" fill="#222" font-family="Liberation Sans" letter-spacing="-.6">ab</text><path d="M8.300 9.600l5.800-7 2.800 2.300-5.800 7z" fill="#e8e8e8" stroke="#4a4a4a" stroke-width=".9"/><path d="M8.300 9.600l-1.700 2.800 4.500-.5z" fill="#c8a040" stroke="#4a4a4a" stroke-width=".7"/></svg>
<div class="arr" style="left:1360.400px;top:264px"></div>
<!-- paragraph align -->
<svg style="left:1178px;top:323px" width="88" height="9" viewBox="0 0 88 9" shape-rendering="crispEdges"><path d="M0 0h12v1h-12zM0 2h9v1h-9zM0 4h12v1h-12zM0 6h9v1h-9zM0 8h12v1h-12zM25 0h12v1h-12zM28 2h6v1h-6zM25 4h12v1h-12zM28 6h6v1h-6zM25 8h12v1h-12zM50 0h12v1h-12zM53 2h9v1h-9zM50 4h12v1h-12zM53 6h9v1h-9zM50 8h12v1h-12zM75 0h12v1h-12zM75 2h12v1h-12zM75 4h12v1h-12zM75 6h12v1h-12zM75 8h12v1h-12z" fill="#1a222e"/></svg>
<!-- bullets / numbering -->
<svg style="left:1175px;top:357px" width="16" height="12" viewBox="0 0 16 12"><circle cx="2.900" cy="2" r="1.700" fill="#4a7cb0" stroke="#14243c" stroke-width="1.100"/><circle cx="2.900" cy="9" r="1.700" fill="#4a7cb0" stroke="#14243c" stroke-width="1.100"/><path d="M7 1h8v1h-8zM7 3h5v1h-5zM7 8h8v1h-8zM7 10h5v1h-5z" fill="#1a222e" shape-rendering="crispEdges"/></svg>
<div class="arr" style="left:1198.600px;top:361.300px"></div>
<svg style="left:1212px;top:357px" width="16" height="12" viewBox="0 0 16 12" shape-rendering="crispEdges"><path d="M1 0h3v1h-3zM2 1h1v3h-1zM1 4h3v1h-3zM0 7h5v1h-5zM1 8h1v3h-1zM3 8h1v3h-1zM0 11h5v1h-5z" fill="#5c6e82"/><path d="M7 1h8v1h-8zM7 3h5v1h-5zM7 8h8v1h-8zM7 10h5v1h-5z" fill="#1a222e"/></svg>
<div class="arr" style="left:1234.700px;top:361.300px"></div>
<!-- background colour -->
<svg style="left:1267px;top:354.500px" width="32" height="17" viewBox="0 0 32 17"><path d="M1 8.300l6.200-6 6 6.300-5.800 6.200z" fill="#a6d0f2" stroke="#1c3a5c" stroke-width="1" stroke-linejoin="round"/><path d="M2.500 8.300l4.700-4.500" stroke="#e4f2fc" stroke-width="1.200"/><path d="M7 5.500V1.800q3.500-1.600 5.800 1.500 2.200 3.200.8 6.800" fill="none" stroke="#1a1a1a" stroke-width="1.500"/><rect x="16.500" y="1.200" width="14.500" height="15" fill="#fff" stroke="#3a3a3a" stroke-width="1"/><rect x="18.600" y="3.300" width="10.300" height="10.800" fill="#fff" stroke="#0c0c0c" stroke-width="1.400"/></svg>
<div class="arr" style="left:1305.700px;top:361.300px"></div>
<!-- spacing increase / decrease -->
<svg style="left:1175.500px;top:405px" width="17" height="16" viewBox="0 0 17 16"><path d="M.6 5.800l3.400-4.300 3.400 4.300z" fill="#6aa6dc" stroke="#16385c" stroke-width="1" stroke-linejoin="round"/><path d="M.6 10.500h6.800l-3.400 4.300z" fill="#6aa6dc" stroke="#16385c" stroke-width="1" stroke-linejoin="round"/><g stroke="#1c2b3e" stroke-width="1.100"><path d="M9 1.600h7.600M9 3.800h7.600M9 6h7.600M9 10.100h7.600M9 12.400h7.600M9 14.600h7.600"/></g></svg>
<svg style="left:1200.500px;top:405px" width="17" height="16" viewBox="0 0 17 16"><path d="M.6 1.800h6.800l-3.400 4.300z" fill="#6aa6dc" stroke="#16385c" stroke-width="1" stroke-linejoin="round"/><path d="M.6 14.300l3.400-4.300 3.400 4.300z" fill="#6aa6dc" stroke="#16385c" stroke-width="1" stroke-linejoin="round"/><g stroke="#1c2b3e" stroke-width="1.100"><path d="M9 2.600h7.600M9 5.400h7.600M9 8.200h7.600M9 11h7.600M9 13.800h7.600"/></g></svg>
<!-- indent inc / dec / hanging -->
<svg style="left:1290px;top:406px" width="17" height="15" viewBox="0 0 17 15"><path d="M8.600 0h1v15h-1z" fill="#6e7276" shape-rendering="crispEdges"/><path d="M5.600 2h10.400v1h-10.400zM5.600 12h10.400v1h-10.400z" fill="#30343a" shape-rendering="crispEdges"/><path d="M9.800 5.300h6.200v1.800h-6.200zM9.800 8.400h4.200v1.700h-4.200z" fill="#1c6cac"/><path d="M.4 6.200h3.600v-2.100l3.800 3.500-3.800 3.500v-2.100h-3.600z" fill="#e8681e" stroke="#8a3000" stroke-width=".8" stroke-linejoin="round"/></svg>
<svg style="left:1315px;top:406px" width="17" height="15" viewBox="0 0 17 15"><path d="M8 0h1v15h-1z" fill="#6e7276" shape-rendering="crispEdges"/><path d="M5 2h11v1h-11zM5 12h11v1h-11z" fill="#30343a" shape-rendering="crispEdges"/><path d="M9.400 5.300h6.500v1.800h-6.500zM9.400 8.400h4.500v1.700h-4.500z" fill="#1c6cac"/><path d="M.4 7.600l3.800-3.500v2.100h3.600v2.800h-3.600v2.100z" fill="#e8681e" stroke="#8a3000" stroke-width=".8" stroke-linejoin="round"/></svg>
<svg style="left:1340px;top:405.500px" width="21" height="16" viewBox="0 0 21 16"><path d="M.6 4.300h3.200v-2.700l4.400 4.400-4.400 4.400v-2.700h-3.200z" fill="#82cc2c" stroke="#3a7a10" stroke-width=".9" stroke-linejoin="round"/><path d="M9.300 3.300v3M12.700 3.300v3M9.300 4.800h3.400" stroke="#1c2b3e" stroke-width="1"/><g stroke="#4a6a9a" stroke-width="1.100"><path d="M14 2.300h6.500M15.500 4.800h5M15.500 7.300h5M15.500 9.800h5M15.500 12.300h5M15.500 14.800h5"/></g></svg>
<!-- spin row icons -->
<svg style="left:1169.500px;top:445px" width="16" height="15" viewBox="0 0 16 15"><path d="M6.800 1v4.400M5 1h3.600M5 5.400h3.600" stroke="#2a3440" stroke-width="1"/><g stroke="#4a6490" stroke-width="1.600"><path d="M.4 7.600h14.800M.4 10.500h14.800M.4 13.400h14.800"/></g></svg>
<svg style="left:1169.500px;top:477px" width="16" height="16" viewBox="0 0 16 16"><g stroke="#4a6490" stroke-width="1.600"><path d="M.4 1.400h14.800M.4 4.200h14.800M.4 7h14.800"/></g><path d="M6.800 10.800v4.400M5 10.800h3.600M5 15.200h3.600" stroke="#2a3440" stroke-width="1"/></svg>
<svg style="left:1284px;top:445px" width="16" height="16" viewBox="0 0 16 16"><path d="M.6.300v3M5.400.300v3M.6 1.800h4.800" stroke="#2a3440" stroke-width="1"/><g stroke="#4a6490" stroke-width="1.500"><path d="M7.400 1.600h7M8.600 4.700h5.800M8.600 7.800h5.800M8.600 10.900h5.800M8.600 14h5.800"/></g></svg>
<svg style="left:1284px;top:477px" width="16" height="16" viewBox="0 0 16 16"><path d="M9.600.800v3M14.800.800v3M9.600 2.300h5.200" stroke="#2a3440" stroke-width="1"/><g stroke="#4a6490" stroke-width="1.500"><path d="M.6 1.700h7M.6 4.800h6M.6 7.900h6M.6 11h6M.6 14.100h6"/></g></svg>
<svg style="left:1284px;top:508px" width="16" height="16" viewBox="0 0 16 16"><path d="M.6.600v3M5.400.600v3M.6 2.100h4.800" stroke="#2a3440" stroke-width="1"/><g stroke="#4a6490" stroke-width="1.600"><path d="M7.500 2.100h7M.4 5.600h14.600M.4 8.700h14.600M.4 11.800h14.600M.4 14.900h14.600"/></g></svg>
<!-- line spacing -->
<svg style="left:1175.500px;top:509.500px" width="18" height="13" viewBox="0 0 18 13"><path d="M2.800 1.500v9.500" stroke="#2a3440" stroke-width="1.300"/><path d="M.4 3.500L2.800.600l2.400 2.900M.4 9l2.400 2.900 2.400-2.900" fill="none" stroke="#2a3440" stroke-width="1.200"/><g stroke="#4a6490" stroke-width="1.800"><path d="M7 3.200h10.200M7 6.300h10.200M7 9.400h10.200"/></g></svg>
<div class="arr" style="left:1200.500px;top:514.300px"></div>
<!-- tab bar -->
<svg style="left:1408px;top:134px" width="10" height="10" viewBox="0 0 10 10"><path d="M.2 1h7.500M.2 3.300h7.500M.2 5.600h5" stroke="#26303c" stroke-width="1.200"/><path d="M4.600 6.600h5l-2.500 2.800z" fill="#111"/></svg>
<div class="a" style="left:1400.500px;top:157px;width:23.500px;height:1px;background:#dadada"></div>
<div class="a" style="left:1396.300px;top:161px;width:31.500px;height:31.500px;border:1px solid #a8a8a8;border-radius:4px;background:#f6f6f6"></div>
<svg style="left:1401px;top:165.500px" width="22" height="24" viewBox="0 0 22 24"><ellipse cx="11" cy="21.500" rx="9" ry="1.800" fill="#c8c8c8"/><path d="M7.500 1l6.800 2v6l-6.800 2.800L1 9V3z" fill="#2ea2e6" stroke="#9fd8f8" stroke-width=".6"/><path d="M1 3l6.500 2.200 6.800-2.200M7.500 5.200v6.600" stroke="#bfe6fb" stroke-width=".8" fill="none"/><path d="M1 9.600l6.400 2.600v7.300L1 17z" fill="#2a96dc" stroke="#9fd8f8" stroke-width=".6"/><path d="M1 13.300l6.400 2.500M4.200 10.900v7.300" stroke="#bfe6fb" stroke-width=".8"/><path d="M14.800 3.800l6.200 2v12.400l-6.200 2.400-7-2.200V12l7-2.600z" fill="#7ed321" stroke="#c6f08a" stroke-width=".6"/><path d="M14.800 9.400v11.200M7.800 12l7 2.400 6.200-2.200M14.800 3.800v5.600M11.300 13.200v6.200M18 13.300v6" stroke="#d2f5a0" stroke-width=".8" fill="none"/></svg>
<svg style="left:1401px;top:199.500px" width="24" height="24" viewBox="0 0 24 24"><ellipse cx="12" cy="22" rx="8.500" ry="1.600" fill="#cfcfcf"/><path d="M5 8l12-3.500 2.500 9L9.500 20z" fill="#1a3c66"/><path d="M4 9.500l7.500 3-2 8z" fill="#3a8ae0"/><path d="M6 11l4.500 2-1.300 5z" fill="#7cc0f8"/><path d="M13 14q5-2 7.500 1.500-2 4.500-8 3.500z" fill="#6ab42c"/><circle cx="8" cy="5" r="2.600" fill="#e8823a"/><path d="M14 .800l.9 1.800 2 .3-1.450 1.400.35 2-1.800-.95-1.800.95.350-2-1.450-1.400 2-.3z" fill="#9a6ad8"/><path d="M20 3l.9 1.800 2 .3-1.450 1.400.35 2-1.800-.95-1.800.95.350-2-1.450-1.400 2-.3z" fill="#f2d04a"/><path d="M3 7.500l.7 1.400 1.600.25-1.150 1.100.27 1.600-1.420-.75-1.420.75.270-1.600-1.150-1.100 1.600-.25z" fill="#e66aa8"/><path d="M21 10.500l.7 1.400 1.600.25-1.150 1.100.27 1.600-1.420-.75-1.420.75.270-1.600-1.150-1.100 1.600-.25z" fill="#e6508a"/></svg>
<svg style="left:1400px;top:234px" width="25" height="24" viewBox="0 0 25 24"><ellipse cx="12.500" cy="22.300" rx="8.500" ry="1.500" fill="#cfcfcf"/><path d="M3 5.500L19.500 1l4.500 13.500L8 19.500z" fill="#f4f6f8" stroke="#b4bcc4" stroke-width=".8"/><path d="M5.500 7l12.500-3.400 3 9.400L9 16.500z" fill="#7cc4f4"/><path d="M7.500 13.500q4-4.500 7-1.500t6-1l.6 2L9 16.500z" fill="#6ab82c"/><path d="M1 9.500L14.500 6l3.500 11L4.500 21z" fill="#f4f6f8" stroke="#b4bcc4" stroke-width=".8"/><path d="M3.200 10.800L13.300 8.200l2.500 8L5.600 19z" fill="#8accf6"/><path d="M4.800 16q3-3.500 5.500-1.500t4.500-1l.9 2.700L5.600 19z" fill="#5cac28"/><path d="M6 12l3 1.500-2 2z" fill="#2a4a7a"/></svg>
<svg style="left:1400.500px;top:270px" width="24" height="24" viewBox="0 0 24 24"><ellipse cx="12" cy="22.500" rx="8" ry="1.300" fill="#d4d4d4"/><circle cx="11.800" cy="11.800" r="10.300" fill="#f2a83a" stroke="#c87c14" stroke-width="1"/><circle cx="11.800" cy="11.800" r="7.800" fill="#fefefe" stroke="#d89a3a" stroke-width=".8"/><path d="M7 17l2.600-7.600 4.600 4.400z" fill="#e4283c"/><path d="M16.600 6.600l-7 2.800 4.600 4.400z" fill="#3a6ed0"/><text x="9.600" y="7.200" font-size="5.500" font-weight="bold" fill="#333" font-family="Liberation Sans">N</text></svg>
</body>
</html>
